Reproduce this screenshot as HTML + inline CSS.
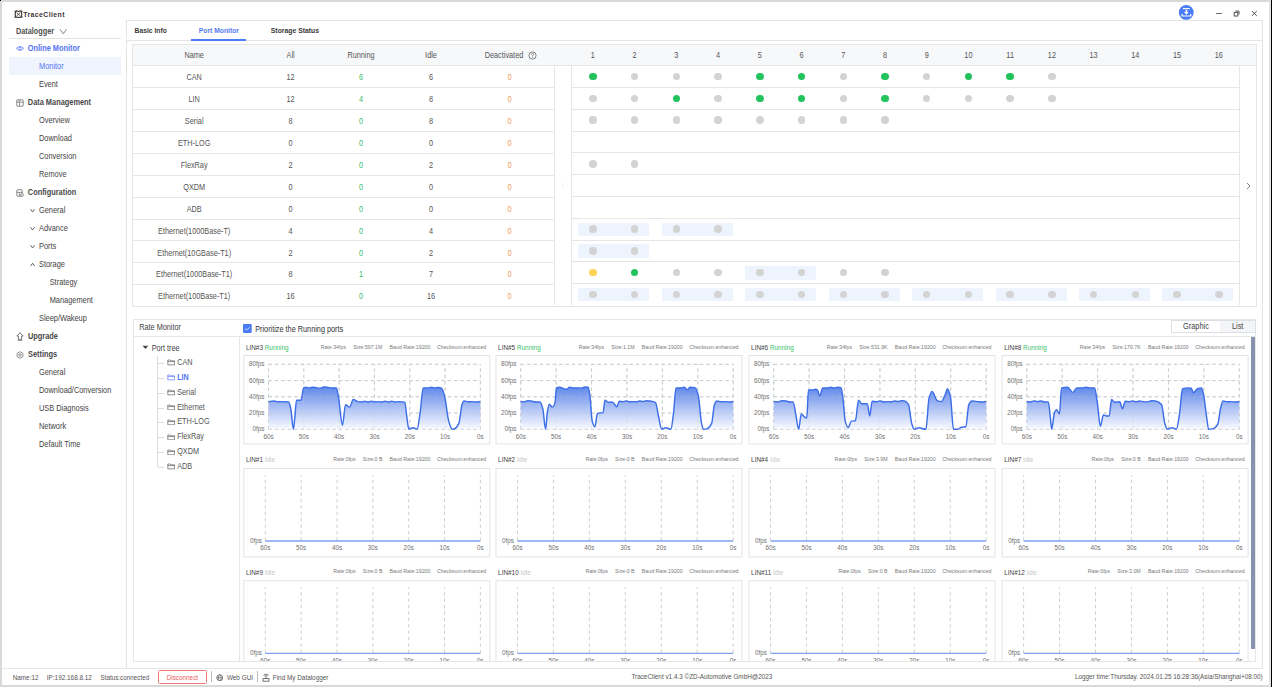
<!DOCTYPE html><html><head><meta charset="utf-8"><style>
*{margin:0;padding:0;box-sizing:border-box}
html,body{width:1272px;height:687px;overflow:hidden;background:#fff;font-family:"Liberation Sans", sans-serif;color:#333}
.ab{position:absolute}
.t{position:absolute;white-space:nowrap;line-height:1;transform:scaleY(1.14);transform-origin:50% 15%}
</style></head><body>

<div class="ab" style="left:0;top:0;width:1272px;height:2px;background:#d9d9d9"></div>
<div class="ab" style="left:0;top:0;width:2px;height:687px;background:#d9d9d9"></div>
<div class="ab" style="left:0;top:685px;width:1272px;height:2px;background:#d9d9d9"></div>
<div class="ab" style="left:1269px;top:0;width:2px;height:687px;background:#e2e2e2"></div>
<div class="ab" style="left:1271px;top:0;width:1px;height:687px;background:#000"></div>
<div class="ab" style="left:0;top:0;width:1px;height:1px;background:#000"></div>
<svg class="ab" style="left:13.5px;top:9.5px" width="9" height="8.5" viewBox="0 0 9 8.5">
<path d="M1.1 1.3 L2.7 0.9 L4.4 1.5 L6.3 0.9 L7.9 1.3 L7.4 2.9 L7.9 4.3 L7.4 5.8 L7.9 7.2 L6.3 7 L4.4 7.6 L2.6 7 L1.1 7.3 L1.6 5.7 L1 4.2 L1.6 2.7 Z" fill="none" stroke="#3b3434" stroke-width="1.1"/>
<path d="M2.6 2.5 L6.4 6 M6.4 2.5 L2.6 6" fill="none" stroke="#3b3434" stroke-width="0.8"/></svg>
<div class="t" style="left:23.3px;top:11.05px;font-size:6.9px;font-weight:bold;color:#3b3434;height:6.9px;line-height:6.9px;letter-spacing:0.4px">TraceClient</div>
<svg class="ab" style="left:1178px;top:4px" width="17" height="17" viewBox="0 0 17 17">
<circle cx="8.25" cy="8.4" r="7.4" fill="#4a7cf7"/>
<path d="M5 4.6 H11.7" stroke="#fff" stroke-width="1.2"/>
<path d="M7.6 5.9 H9.2 V7.9 H10.6 L8.4 10.8 L6.1 7.9 H7.6 Z" fill="#fff"/>
<path d="M4.1 9.9 V12 H12.7 V9.9" stroke="#fff" stroke-width="1.2" fill="none"/>
</svg>
<div class="ab" style="left:1215.6px;top:12.8px;width:6.4px;height:1px;background:#707070;"></div>
<svg class="ab" style="left:1233px;top:9.5px" width="7" height="7" viewBox="0 0 7 7">
<rect x="1.2" y="2.4" width="3.6" height="3.6" fill="none" stroke="#555" stroke-width="1"/>
<path d="M2.4 1.1 H6 V4.6" fill="none" stroke="#555" stroke-width="1"/></svg>
<svg class="ab" style="left:1251px;top:10px" width="7" height="7" viewBox="0 0 7 7">
<path d="M0.9 1 L5.8 5.9 M5.8 1 L0.9 5.9" stroke="#444" stroke-width="0.95"/></svg>
<div class="t" style="left:16px;top:27.05px;font-size:7.3px;font-weight:bold;color:#505050;height:7.3px;line-height:7.3px;">Datalogger</div>
<svg class="ab" style="left:59px;top:28px" width="9" height="7" viewBox="0 0 9 7">
<path d="M1 1.2 L4.3 5.8 L7.6 1.2" fill="none" stroke="#777" stroke-width="0.9"/></svg>
<div class="ab" style="left:9px;top:38px;width:112px;height:1px;background:#e3e3e3;"></div>
<div class="ab" style="left:9.2px;top:56.8px;width:111.5px;height:18.7px;background:#eff4ff;"></div>
<div class="t" style="left:27.8px;top:44.30px;font-size:7.4px;font-weight:bold;color:#5574f2;height:7.4px;line-height:7.4px;">Online Monitor</div>
<div class="t" style="left:39px;top:62.30px;font-size:7.4px;font-weight:normal;color:#5574f2;height:7.4px;line-height:7.4px;">Monitor</div>
<div class="t" style="left:39px;top:80.30px;font-size:7.4px;font-weight:normal;color:#444;height:7.4px;line-height:7.4px;">Event</div>
<div class="t" style="left:27.8px;top:98.30px;font-size:7.4px;font-weight:bold;color:#484848;height:7.4px;line-height:7.4px;">Data Management</div>
<div class="t" style="left:39px;top:116.30px;font-size:7.4px;font-weight:normal;color:#444;height:7.4px;line-height:7.4px;">Overview</div>
<div class="t" style="left:39px;top:134.30px;font-size:7.4px;font-weight:normal;color:#444;height:7.4px;line-height:7.4px;">Download</div>
<div class="t" style="left:39px;top:152.30px;font-size:7.4px;font-weight:normal;color:#444;height:7.4px;line-height:7.4px;">Conversion</div>
<div class="t" style="left:39px;top:170.30px;font-size:7.4px;font-weight:normal;color:#444;height:7.4px;line-height:7.4px;">Remove</div>
<div class="t" style="left:27.8px;top:188.30px;font-size:7.4px;font-weight:bold;color:#484848;height:7.4px;line-height:7.4px;">Configuration</div>
<div class="t" style="left:39px;top:206.30px;font-size:7.4px;font-weight:normal;color:#444;height:7.4px;line-height:7.4px;">General</div>
<div class="t" style="left:39px;top:224.30px;font-size:7.4px;font-weight:normal;color:#444;height:7.4px;line-height:7.4px;">Advance</div>
<div class="t" style="left:39px;top:242.30px;font-size:7.4px;font-weight:normal;color:#444;height:7.4px;line-height:7.4px;">Ports</div>
<div class="t" style="left:39px;top:260.30px;font-size:7.4px;font-weight:normal;color:#444;height:7.4px;line-height:7.4px;">Storage</div>
<div class="t" style="left:49.7px;top:278.30px;font-size:7.4px;font-weight:normal;color:#444;height:7.4px;line-height:7.4px;">Strategy</div>
<div class="t" style="left:49.7px;top:296.30px;font-size:7.4px;font-weight:normal;color:#444;height:7.4px;line-height:7.4px;">Management</div>
<div class="t" style="left:39px;top:314.30px;font-size:7.4px;font-weight:normal;color:#444;height:7.4px;line-height:7.4px;">Sleep/Wakeup</div>
<div class="t" style="left:28px;top:332.30px;font-size:7.4px;font-weight:bold;color:#484848;height:7.4px;line-height:7.4px;">Upgrade</div>
<div class="t" style="left:28px;top:350.30px;font-size:7.4px;font-weight:bold;color:#484848;height:7.4px;line-height:7.4px;">Settings</div>
<div class="t" style="left:39px;top:368.30px;font-size:7.4px;font-weight:normal;color:#444;height:7.4px;line-height:7.4px;">General</div>
<div class="t" style="left:39px;top:386.30px;font-size:7.4px;font-weight:normal;color:#444;height:7.4px;line-height:7.4px;">Download/Conversion</div>
<div class="t" style="left:39px;top:404.30px;font-size:7.4px;font-weight:normal;color:#444;height:7.4px;line-height:7.4px;">USB Diagnosis</div>
<div class="t" style="left:39px;top:422.30px;font-size:7.4px;font-weight:normal;color:#444;height:7.4px;line-height:7.4px;">Network</div>
<div class="t" style="left:39px;top:440.30px;font-size:7.4px;font-weight:normal;color:#444;height:7.4px;line-height:7.4px;">Default Time</div>
<svg class="ab" style="left:15.5px;top:45px" width="8" height="7" viewBox="0 0 8 7"><path d="M0.5 3.4 Q4 -0.4 7.5 3.4 Q4 7.2 0.5 3.4 Z" fill="none" stroke="#6f86f3" stroke-width="0.9"/><circle cx="4" cy="3.4" r="1.3" fill="none" stroke="#6f86f3" stroke-width="0.8"/></svg>
<svg class="ab" style="left:15.5px;top:98.5px" width="8" height="8" viewBox="0 0 8 8"><rect x="0.8" y="0.8" width="6.4" height="6.4" rx="0.6" fill="none" stroke="#7a7a7a" stroke-width="0.9"/><path d="M0.8 3.2 H7.2 M3.6 3.2 V7.2 M2 2 H4.5" fill="none" stroke="#7a7a7a" stroke-width="0.8"/></svg>
<svg class="ab" style="left:15.5px;top:188.5px" width="8" height="8" viewBox="0 0 8 8"><rect x="0.8" y="0.8" width="5.4" height="6.4" rx="0.6" fill="none" stroke="#7a7a7a" stroke-width="0.9"/><path d="M0.8 3.4 H6.2 M3.4 3.4 V7.2" fill="none" stroke="#7a7a7a" stroke-width="0.8"/><circle cx="6" cy="6" r="1.4" fill="#fff" stroke="#7a7a7a" stroke-width="0.8"/></svg>
<svg class="ab" style="left:15.5px;top:332px" width="8" height="9" viewBox="0 0 8 9"><path d="M4 0.8 L7.2 4 H5.6 V7.4 H2.4 V4 H0.8 Z" fill="none" stroke="#666" stroke-width="0.9"/><path d="M1.6 8.3 H6.4" stroke="#666" stroke-width="0.8"/></svg>
<svg class="ab" style="left:15.5px;top:350.5px" width="8" height="8" viewBox="0 0 8 8"><path d="M4 0.7 L6.9 2.3 V5.7 L4 7.3 L1.1 5.7 V2.3 Z" fill="none" stroke="#777" stroke-width="0.8"/><circle cx="4" cy="4" r="1.2" fill="none" stroke="#777" stroke-width="0.8"/></svg>
<svg class="ab" style="left:30.1px;top:207.6px" width="5.2" height="5.2" viewBox="0 0 5.2 5.2"><path d="M0.6 1.3 L2.6 3.9 L4.6 1.3" fill="none" stroke="#505050" stroke-width="0.95"/></svg>
<svg class="ab" style="left:30.1px;top:225.6px" width="5.2" height="5.2" viewBox="0 0 5.2 5.2"><path d="M0.6 1.3 L2.6 3.9 L4.6 1.3" fill="none" stroke="#505050" stroke-width="0.95"/></svg>
<svg class="ab" style="left:30.1px;top:243.6px" width="5.2" height="5.2" viewBox="0 0 5.2 5.2"><path d="M0.6 1.3 L2.6 3.9 L4.6 1.3" fill="none" stroke="#505050" stroke-width="0.95"/></svg>
<svg class="ab" style="left:30.1px;top:261.6px" width="5.2" height="5.2" viewBox="0 0 5.2 5.2"><path d="M0.6 3.9 L2.6 1.3 L4.6 3.9" fill="none" stroke="#505050" stroke-width="0.95"/></svg>
<div class="ab" style="left:126px;top:20px;width:1137px;height:649px;border:1px solid #e4e4e4"></div>
<div class="ab" style="left:2px;top:668px;width:1261px;height:1px;background:#e6e6e6;"></div>
<div class="t" style="left:134.6px;top:27.23px;font-size:6.75px;font-weight:bold;color:#3a3a3a;height:6.75px;line-height:6.75px;">Basic Info</div>
<div class="t" style="left:198.8px;top:27.23px;font-size:6.75px;font-weight:bold;color:#5577f0;height:6.75px;line-height:6.75px;">Port Monitor</div>
<div class="t" style="left:270.8px;top:27.18px;font-size:6.85px;font-weight:bold;color:#3a3a3a;height:6.85px;line-height:6.85px;">Storage Status</div>
<div class="ab" style="left:127px;top:40px;width:1135px;height:1px;background:#e4e4e4;"></div>
<div class="ab" style="left:190.7px;top:39.2px;width:55.3px;height:1.8px;background:#4b7bf5;"></div>
<div class="ab" style="left:132px;top:44px;width:1125px;height:263px;border:1px solid #e6e6e6"></div>
<div class="ab" style="left:133px;top:45px;width:1123px;height:21px;background:#f7f8fa;"></div>
<div class="ab" style="left:133px;top:65.1px;width:1123px;height:1px;background:#e6e6e6;"></div>
<div class="ab" style="left:553.5px;top:66px;width:1px;height:238.5px;background:#e6e6e6;"></div>
<div class="ab" style="left:571.2px;top:66px;width:1px;height:238.5px;background:#e6e6e6;"></div>
<div class="ab" style="left:1238.8px;top:66px;width:1px;height:238.5px;background:#e6e6e6;"></div>
<div class="ab" style="left:133px;top:87.28px;width:420.5px;height:1px;background:#e6e6e6;"></div>
<div class="ab" style="left:572.2px;top:87.17px;width:666.5999999999999px;height:1px;background:#e6e6e6;"></div>
<div class="ab" style="left:133px;top:109.16px;width:420.5px;height:1px;background:#e6e6e6;"></div>
<div class="ab" style="left:572.2px;top:108.94px;width:666.5999999999999px;height:1px;background:#e6e6e6;"></div>
<div class="ab" style="left:133px;top:131.04px;width:420.5px;height:1px;background:#e6e6e6;"></div>
<div class="ab" style="left:572.2px;top:130.71px;width:666.5999999999999px;height:1px;background:#e6e6e6;"></div>
<div class="ab" style="left:133px;top:152.92px;width:420.5px;height:1px;background:#e6e6e6;"></div>
<div class="ab" style="left:572.2px;top:152.48px;width:666.5999999999999px;height:1px;background:#e6e6e6;"></div>
<div class="ab" style="left:133px;top:174.8px;width:420.5px;height:1px;background:#e6e6e6;"></div>
<div class="ab" style="left:572.2px;top:174.25px;width:666.5999999999999px;height:1px;background:#e6e6e6;"></div>
<div class="ab" style="left:133px;top:196.68px;width:420.5px;height:1px;background:#e6e6e6;"></div>
<div class="ab" style="left:572.2px;top:196.02px;width:666.5999999999999px;height:1px;background:#e6e6e6;"></div>
<div class="ab" style="left:133px;top:218.56px;width:420.5px;height:1px;background:#e6e6e6;"></div>
<div class="ab" style="left:572.2px;top:217.79px;width:666.5999999999999px;height:1px;background:#e6e6e6;"></div>
<div class="ab" style="left:133px;top:240.44px;width:420.5px;height:1px;background:#e6e6e6;"></div>
<div class="ab" style="left:572.2px;top:239.56px;width:666.5999999999999px;height:1px;background:#e6e6e6;"></div>
<div class="ab" style="left:133px;top:262.32px;width:420.5px;height:1px;background:#e6e6e6;"></div>
<div class="ab" style="left:572.2px;top:261.33px;width:666.5999999999999px;height:1px;background:#e6e6e6;"></div>
<div class="ab" style="left:133px;top:284.2px;width:420.5px;height:1px;background:#e6e6e6;"></div>
<div class="ab" style="left:572.2px;top:283.1px;width:666.5999999999999px;height:1px;background:#e6e6e6;"></div>
<div class="t" style="left:94.19999999999999px;width:200px;text-align:center;top:51.25px;font-size:7.3px;font-weight:normal;color:#555;height:7.3px;line-height:7.3px;">Name</div>
<div class="t" style="left:190.60000000000002px;width:200px;text-align:center;top:51.25px;font-size:7.3px;font-weight:normal;color:#555;height:7.3px;line-height:7.3px;">All</div>
<div class="t" style="left:261px;width:200px;text-align:center;top:51.25px;font-size:7.3px;font-weight:normal;color:#555;height:7.3px;line-height:7.3px;">Running</div>
<div class="t" style="left:331px;width:200px;text-align:center;top:51.25px;font-size:7.3px;font-weight:normal;color:#555;height:7.3px;line-height:7.3px;">Idle</div>
<div class="t" style="left:404.0px;width:200px;text-align:center;top:51.25px;font-size:7.3px;font-weight:normal;color:#555;height:7.3px;line-height:7.3px;">Deactivated</div>
<svg class="ab" style="left:528px;top:51px" width="9" height="9" viewBox="0 0 9 9"><circle cx="4.5" cy="4.5" r="3.6" fill="none" stroke="#666" stroke-width="0.8"/><path d="M3.3 3.6 Q3.4 2.5 4.5 2.5 Q5.7 2.6 5.6 3.6 Q5.5 4.3 4.5 4.7 V5.4" fill="none" stroke="#666" stroke-width="0.75"/><circle cx="4.5" cy="6.5" r="0.45" fill="#666"/></svg>
<div class="t" style="left:492.865px;width:200px;text-align:center;top:51.25px;font-size:7.3px;font-weight:normal;color:#555;height:7.3px;line-height:7.3px;">1</div>
<div class="t" style="left:534.595px;width:200px;text-align:center;top:51.25px;font-size:7.3px;font-weight:normal;color:#555;height:7.3px;line-height:7.3px;">2</div>
<div class="t" style="left:576.325px;width:200px;text-align:center;top:51.25px;font-size:7.3px;font-weight:normal;color:#555;height:7.3px;line-height:7.3px;">3</div>
<div class="t" style="left:618.055px;width:200px;text-align:center;top:51.25px;font-size:7.3px;font-weight:normal;color:#555;height:7.3px;line-height:7.3px;">4</div>
<div class="t" style="left:659.785px;width:200px;text-align:center;top:51.25px;font-size:7.3px;font-weight:normal;color:#555;height:7.3px;line-height:7.3px;">5</div>
<div class="t" style="left:701.515px;width:200px;text-align:center;top:51.25px;font-size:7.3px;font-weight:normal;color:#555;height:7.3px;line-height:7.3px;">6</div>
<div class="t" style="left:743.245px;width:200px;text-align:center;top:51.25px;font-size:7.3px;font-weight:normal;color:#555;height:7.3px;line-height:7.3px;">7</div>
<div class="t" style="left:784.9749999999999px;width:200px;text-align:center;top:51.25px;font-size:7.3px;font-weight:normal;color:#555;height:7.3px;line-height:7.3px;">8</div>
<div class="t" style="left:826.7049999999999px;width:200px;text-align:center;top:51.25px;font-size:7.3px;font-weight:normal;color:#555;height:7.3px;line-height:7.3px;">9</div>
<div class="t" style="left:868.435px;width:200px;text-align:center;top:51.25px;font-size:7.3px;font-weight:normal;color:#555;height:7.3px;line-height:7.3px;">10</div>
<div class="t" style="left:910.165px;width:200px;text-align:center;top:51.25px;font-size:7.3px;font-weight:normal;color:#555;height:7.3px;line-height:7.3px;">11</div>
<div class="t" style="left:951.895px;width:200px;text-align:center;top:51.25px;font-size:7.3px;font-weight:normal;color:#555;height:7.3px;line-height:7.3px;">12</div>
<div class="t" style="left:993.625px;width:200px;text-align:center;top:51.25px;font-size:7.3px;font-weight:normal;color:#555;height:7.3px;line-height:7.3px;">13</div>
<div class="t" style="left:1035.355px;width:200px;text-align:center;top:51.25px;font-size:7.3px;font-weight:normal;color:#555;height:7.3px;line-height:7.3px;">14</div>
<div class="t" style="left:1077.085px;width:200px;text-align:center;top:51.25px;font-size:7.3px;font-weight:normal;color:#555;height:7.3px;line-height:7.3px;">15</div>
<div class="t" style="left:1118.815px;width:200px;text-align:center;top:51.25px;font-size:7.3px;font-weight:normal;color:#555;height:7.3px;line-height:7.3px;">16</div>
<div class="t" style="left:94.19999999999999px;width:200px;text-align:center;top:73.49px;font-size:7.3px;font-weight:normal;color:#555;height:7.3px;line-height:7.3px;">CAN</div>
<div class="t" style="left:190.60000000000002px;width:200px;text-align:center;top:73.49px;font-size:7.3px;font-weight:normal;color:#555;height:7.3px;line-height:7.3px;">12</div>
<div class="t" style="left:261px;width:200px;text-align:center;top:73.49px;font-size:7.3px;font-weight:normal;color:#36c06a;height:7.3px;line-height:7.3px;">6</div>
<div class="t" style="left:331px;width:200px;text-align:center;top:73.49px;font-size:7.3px;font-weight:normal;color:#555;height:7.3px;line-height:7.3px;">6</div>
<div class="t" style="left:409.5px;width:200px;text-align:center;top:73.49px;font-size:7.3px;font-weight:normal;color:#f39a5c;height:7.3px;line-height:7.3px;">0</div>
<div class="t" style="left:94.19999999999999px;width:200px;text-align:center;top:95.37px;font-size:7.3px;font-weight:normal;color:#555;height:7.3px;line-height:7.3px;">LIN</div>
<div class="t" style="left:190.60000000000002px;width:200px;text-align:center;top:95.37px;font-size:7.3px;font-weight:normal;color:#555;height:7.3px;line-height:7.3px;">12</div>
<div class="t" style="left:261px;width:200px;text-align:center;top:95.37px;font-size:7.3px;font-weight:normal;color:#36c06a;height:7.3px;line-height:7.3px;">4</div>
<div class="t" style="left:331px;width:200px;text-align:center;top:95.37px;font-size:7.3px;font-weight:normal;color:#555;height:7.3px;line-height:7.3px;">8</div>
<div class="t" style="left:409.5px;width:200px;text-align:center;top:95.37px;font-size:7.3px;font-weight:normal;color:#f39a5c;height:7.3px;line-height:7.3px;">0</div>
<div class="t" style="left:94.19999999999999px;width:200px;text-align:center;top:117.25px;font-size:7.3px;font-weight:normal;color:#555;height:7.3px;line-height:7.3px;">Serial</div>
<div class="t" style="left:190.60000000000002px;width:200px;text-align:center;top:117.25px;font-size:7.3px;font-weight:normal;color:#555;height:7.3px;line-height:7.3px;">8</div>
<div class="t" style="left:261px;width:200px;text-align:center;top:117.25px;font-size:7.3px;font-weight:normal;color:#36c06a;height:7.3px;line-height:7.3px;">0</div>
<div class="t" style="left:331px;width:200px;text-align:center;top:117.25px;font-size:7.3px;font-weight:normal;color:#555;height:7.3px;line-height:7.3px;">8</div>
<div class="t" style="left:409.5px;width:200px;text-align:center;top:117.25px;font-size:7.3px;font-weight:normal;color:#f39a5c;height:7.3px;line-height:7.3px;">0</div>
<div class="t" style="left:94.19999999999999px;width:200px;text-align:center;top:139.13px;font-size:7.3px;font-weight:normal;color:#555;height:7.3px;line-height:7.3px;">ETH-LOG</div>
<div class="t" style="left:190.60000000000002px;width:200px;text-align:center;top:139.13px;font-size:7.3px;font-weight:normal;color:#555;height:7.3px;line-height:7.3px;">0</div>
<div class="t" style="left:261px;width:200px;text-align:center;top:139.13px;font-size:7.3px;font-weight:normal;color:#36c06a;height:7.3px;line-height:7.3px;">0</div>
<div class="t" style="left:331px;width:200px;text-align:center;top:139.13px;font-size:7.3px;font-weight:normal;color:#555;height:7.3px;line-height:7.3px;">0</div>
<div class="t" style="left:409.5px;width:200px;text-align:center;top:139.13px;font-size:7.3px;font-weight:normal;color:#f39a5c;height:7.3px;line-height:7.3px;">0</div>
<div class="t" style="left:94.19999999999999px;width:200px;text-align:center;top:161.01px;font-size:7.3px;font-weight:normal;color:#555;height:7.3px;line-height:7.3px;">FlexRay</div>
<div class="t" style="left:190.60000000000002px;width:200px;text-align:center;top:161.01px;font-size:7.3px;font-weight:normal;color:#555;height:7.3px;line-height:7.3px;">2</div>
<div class="t" style="left:261px;width:200px;text-align:center;top:161.01px;font-size:7.3px;font-weight:normal;color:#36c06a;height:7.3px;line-height:7.3px;">0</div>
<div class="t" style="left:331px;width:200px;text-align:center;top:161.01px;font-size:7.3px;font-weight:normal;color:#555;height:7.3px;line-height:7.3px;">2</div>
<div class="t" style="left:409.5px;width:200px;text-align:center;top:161.01px;font-size:7.3px;font-weight:normal;color:#f39a5c;height:7.3px;line-height:7.3px;">0</div>
<div class="t" style="left:94.19999999999999px;width:200px;text-align:center;top:182.89px;font-size:7.3px;font-weight:normal;color:#555;height:7.3px;line-height:7.3px;">QXDM</div>
<div class="t" style="left:190.60000000000002px;width:200px;text-align:center;top:182.89px;font-size:7.3px;font-weight:normal;color:#555;height:7.3px;line-height:7.3px;">0</div>
<div class="t" style="left:261px;width:200px;text-align:center;top:182.89px;font-size:7.3px;font-weight:normal;color:#36c06a;height:7.3px;line-height:7.3px;">0</div>
<div class="t" style="left:331px;width:200px;text-align:center;top:182.89px;font-size:7.3px;font-weight:normal;color:#555;height:7.3px;line-height:7.3px;">0</div>
<div class="t" style="left:409.5px;width:200px;text-align:center;top:182.89px;font-size:7.3px;font-weight:normal;color:#f39a5c;height:7.3px;line-height:7.3px;">0</div>
<div class="t" style="left:94.19999999999999px;width:200px;text-align:center;top:204.77px;font-size:7.3px;font-weight:normal;color:#555;height:7.3px;line-height:7.3px;">ADB</div>
<div class="t" style="left:190.60000000000002px;width:200px;text-align:center;top:204.77px;font-size:7.3px;font-weight:normal;color:#555;height:7.3px;line-height:7.3px;">0</div>
<div class="t" style="left:261px;width:200px;text-align:center;top:204.77px;font-size:7.3px;font-weight:normal;color:#36c06a;height:7.3px;line-height:7.3px;">0</div>
<div class="t" style="left:331px;width:200px;text-align:center;top:204.77px;font-size:7.3px;font-weight:normal;color:#555;height:7.3px;line-height:7.3px;">0</div>
<div class="t" style="left:409.5px;width:200px;text-align:center;top:204.77px;font-size:7.3px;font-weight:normal;color:#f39a5c;height:7.3px;line-height:7.3px;">0</div>
<div class="t" style="left:94.19999999999999px;width:200px;text-align:center;top:226.65px;font-size:7.3px;font-weight:normal;color:#555;height:7.3px;line-height:7.3px;">Ethernet(1000Base-T)</div>
<div class="t" style="left:190.60000000000002px;width:200px;text-align:center;top:226.65px;font-size:7.3px;font-weight:normal;color:#555;height:7.3px;line-height:7.3px;">4</div>
<div class="t" style="left:261px;width:200px;text-align:center;top:226.65px;font-size:7.3px;font-weight:normal;color:#36c06a;height:7.3px;line-height:7.3px;">0</div>
<div class="t" style="left:331px;width:200px;text-align:center;top:226.65px;font-size:7.3px;font-weight:normal;color:#555;height:7.3px;line-height:7.3px;">4</div>
<div class="t" style="left:409.5px;width:200px;text-align:center;top:226.65px;font-size:7.3px;font-weight:normal;color:#f39a5c;height:7.3px;line-height:7.3px;">0</div>
<div class="t" style="left:94.19999999999999px;width:200px;text-align:center;top:248.53px;font-size:7.3px;font-weight:normal;color:#555;height:7.3px;line-height:7.3px;">Ethernet(10GBase-T1)</div>
<div class="t" style="left:190.60000000000002px;width:200px;text-align:center;top:248.53px;font-size:7.3px;font-weight:normal;color:#555;height:7.3px;line-height:7.3px;">2</div>
<div class="t" style="left:261px;width:200px;text-align:center;top:248.53px;font-size:7.3px;font-weight:normal;color:#36c06a;height:7.3px;line-height:7.3px;">0</div>
<div class="t" style="left:331px;width:200px;text-align:center;top:248.53px;font-size:7.3px;font-weight:normal;color:#555;height:7.3px;line-height:7.3px;">2</div>
<div class="t" style="left:409.5px;width:200px;text-align:center;top:248.53px;font-size:7.3px;font-weight:normal;color:#f39a5c;height:7.3px;line-height:7.3px;">0</div>
<div class="t" style="left:94.19999999999999px;width:200px;text-align:center;top:270.41px;font-size:7.3px;font-weight:normal;color:#555;height:7.3px;line-height:7.3px;">Ethernet(1000Base-T1)</div>
<div class="t" style="left:190.60000000000002px;width:200px;text-align:center;top:270.41px;font-size:7.3px;font-weight:normal;color:#555;height:7.3px;line-height:7.3px;">8</div>
<div class="t" style="left:261px;width:200px;text-align:center;top:270.41px;font-size:7.3px;font-weight:normal;color:#36c06a;height:7.3px;line-height:7.3px;">1</div>
<div class="t" style="left:331px;width:200px;text-align:center;top:270.41px;font-size:7.3px;font-weight:normal;color:#555;height:7.3px;line-height:7.3px;">7</div>
<div class="t" style="left:409.5px;width:200px;text-align:center;top:270.41px;font-size:7.3px;font-weight:normal;color:#f39a5c;height:7.3px;line-height:7.3px;">0</div>
<div class="t" style="left:94.19999999999999px;width:200px;text-align:center;top:292.29px;font-size:7.3px;font-weight:normal;color:#555;height:7.3px;line-height:7.3px;">Ethernet(100Base-T1)</div>
<div class="t" style="left:190.60000000000002px;width:200px;text-align:center;top:292.29px;font-size:7.3px;font-weight:normal;color:#555;height:7.3px;line-height:7.3px;">16</div>
<div class="t" style="left:261px;width:200px;text-align:center;top:292.29px;font-size:7.3px;font-weight:normal;color:#36c06a;height:7.3px;line-height:7.3px;">0</div>
<div class="t" style="left:331px;width:200px;text-align:center;top:292.29px;font-size:7.3px;font-weight:normal;color:#555;height:7.3px;line-height:7.3px;">16</div>
<div class="t" style="left:409.5px;width:200px;text-align:center;top:292.29px;font-size:7.3px;font-weight:normal;color:#f39a5c;height:7.3px;line-height:7.3px;">0</div>
<svg class="ab" style="left:1245px;top:182px" width="7" height="8" viewBox="0 0 7 8"><path d="M2 1 L5 4 L2 7" fill="none" stroke="#777" stroke-width="0.9"/></svg>
<svg class="ab" style="left:560px;top:182px" width="7" height="8" viewBox="0 0 7 8"><path d="M5 1 L2 4 L5 7" fill="none" stroke="#eee" stroke-width="0.9"/></svg>
<div class="ab" style="left:578.2px;top:222.7px;width:71px;height:13.4px;background:#eef4fd;"></div>
<div class="ab" style="left:661.7px;top:222.7px;width:71px;height:13.4px;background:#eef4fd;"></div>
<div class="ab" style="left:578.2px;top:244.4px;width:71px;height:13.4px;background:#eef4fd;"></div>
<div class="ab" style="left:745.1px;top:266.2px;width:71px;height:13.4px;background:#eef4fd;"></div>
<div class="ab" style="left:578.2px;top:288.0px;width:71px;height:13.4px;background:#eef4fd;"></div>
<div class="ab" style="left:661.7px;top:288.0px;width:71px;height:13.4px;background:#eef4fd;"></div>
<div class="ab" style="left:745.1px;top:288.0px;width:71px;height:13.4px;background:#eef4fd;"></div>
<div class="ab" style="left:828.6px;top:288.0px;width:71px;height:13.4px;background:#eef4fd;"></div>
<div class="ab" style="left:912.0px;top:288.0px;width:71px;height:13.4px;background:#eef4fd;"></div>
<div class="ab" style="left:995.5px;top:288.0px;width:71px;height:13.4px;background:#eef4fd;"></div>
<div class="ab" style="left:1079.0px;top:288.0px;width:71px;height:13.4px;background:#eef4fd;"></div>
<div class="ab" style="left:1162.4px;top:288.0px;width:71px;height:13.4px;background:#eef4fd;"></div>
<div class="ab" style="left:589.12px;top:72.94px;width:7.5px;height:7.5px;border-radius:50%;background:#22c35d"></div>
<div class="ab" style="left:630.85px;top:72.94px;width:7.5px;height:7.5px;border-radius:50%;background:#d3d3d3"></div>
<div class="ab" style="left:672.58px;top:72.94px;width:7.5px;height:7.5px;border-radius:50%;background:#d3d3d3"></div>
<div class="ab" style="left:714.30px;top:72.94px;width:7.5px;height:7.5px;border-radius:50%;background:#d3d3d3"></div>
<div class="ab" style="left:756.03px;top:72.94px;width:7.5px;height:7.5px;border-radius:50%;background:#22c35d"></div>
<div class="ab" style="left:797.76px;top:72.94px;width:7.5px;height:7.5px;border-radius:50%;background:#22c35d"></div>
<div class="ab" style="left:839.50px;top:72.94px;width:7.5px;height:7.5px;border-radius:50%;background:#d3d3d3"></div>
<div class="ab" style="left:881.22px;top:72.94px;width:7.5px;height:7.5px;border-radius:50%;background:#22c35d"></div>
<div class="ab" style="left:922.95px;top:72.94px;width:7.5px;height:7.5px;border-radius:50%;background:#d3d3d3"></div>
<div class="ab" style="left:964.68px;top:72.94px;width:7.5px;height:7.5px;border-radius:50%;background:#22c35d"></div>
<div class="ab" style="left:1006.41px;top:72.94px;width:7.5px;height:7.5px;border-radius:50%;background:#22c35d"></div>
<div class="ab" style="left:1048.14px;top:72.94px;width:7.5px;height:7.5px;border-radius:50%;background:#d3d3d3"></div>
<div class="ab" style="left:589.12px;top:94.70px;width:7.5px;height:7.5px;border-radius:50%;background:#d3d3d3"></div>
<div class="ab" style="left:630.85px;top:94.70px;width:7.5px;height:7.5px;border-radius:50%;background:#d3d3d3"></div>
<div class="ab" style="left:672.58px;top:94.70px;width:7.5px;height:7.5px;border-radius:50%;background:#22c35d"></div>
<div class="ab" style="left:714.30px;top:94.70px;width:7.5px;height:7.5px;border-radius:50%;background:#d3d3d3"></div>
<div class="ab" style="left:756.03px;top:94.70px;width:7.5px;height:7.5px;border-radius:50%;background:#22c35d"></div>
<div class="ab" style="left:797.76px;top:94.70px;width:7.5px;height:7.5px;border-radius:50%;background:#22c35d"></div>
<div class="ab" style="left:839.50px;top:94.70px;width:7.5px;height:7.5px;border-radius:50%;background:#d3d3d3"></div>
<div class="ab" style="left:881.22px;top:94.70px;width:7.5px;height:7.5px;border-radius:50%;background:#22c35d"></div>
<div class="ab" style="left:922.95px;top:94.70px;width:7.5px;height:7.5px;border-radius:50%;background:#d3d3d3"></div>
<div class="ab" style="left:964.68px;top:94.70px;width:7.5px;height:7.5px;border-radius:50%;background:#d3d3d3"></div>
<div class="ab" style="left:1006.41px;top:94.70px;width:7.5px;height:7.5px;border-radius:50%;background:#d3d3d3"></div>
<div class="ab" style="left:1048.14px;top:94.70px;width:7.5px;height:7.5px;border-radius:50%;background:#d3d3d3"></div>
<div class="ab" style="left:589.12px;top:116.47px;width:7.5px;height:7.5px;border-radius:50%;background:#d3d3d3"></div>
<div class="ab" style="left:630.85px;top:116.47px;width:7.5px;height:7.5px;border-radius:50%;background:#d3d3d3"></div>
<div class="ab" style="left:672.58px;top:116.47px;width:7.5px;height:7.5px;border-radius:50%;background:#d3d3d3"></div>
<div class="ab" style="left:714.30px;top:116.47px;width:7.5px;height:7.5px;border-radius:50%;background:#d3d3d3"></div>
<div class="ab" style="left:756.03px;top:116.47px;width:7.5px;height:7.5px;border-radius:50%;background:#d3d3d3"></div>
<div class="ab" style="left:797.76px;top:116.47px;width:7.5px;height:7.5px;border-radius:50%;background:#d3d3d3"></div>
<div class="ab" style="left:839.50px;top:116.47px;width:7.5px;height:7.5px;border-radius:50%;background:#d3d3d3"></div>
<div class="ab" style="left:881.22px;top:116.47px;width:7.5px;height:7.5px;border-radius:50%;background:#d3d3d3"></div>
<div class="ab" style="left:589.12px;top:160.01px;width:7.5px;height:7.5px;border-radius:50%;background:#d3d3d3"></div>
<div class="ab" style="left:630.85px;top:160.01px;width:7.5px;height:7.5px;border-radius:50%;background:#d3d3d3"></div>
<div class="ab" style="left:589.12px;top:225.32px;width:7.5px;height:7.5px;border-radius:50%;background:#d3d3d3"></div>
<div class="ab" style="left:630.85px;top:225.32px;width:7.5px;height:7.5px;border-radius:50%;background:#d3d3d3"></div>
<div class="ab" style="left:672.58px;top:225.32px;width:7.5px;height:7.5px;border-radius:50%;background:#d3d3d3"></div>
<div class="ab" style="left:714.30px;top:225.32px;width:7.5px;height:7.5px;border-radius:50%;background:#d3d3d3"></div>
<div class="ab" style="left:589.12px;top:247.09px;width:7.5px;height:7.5px;border-radius:50%;background:#d3d3d3"></div>
<div class="ab" style="left:630.85px;top:247.09px;width:7.5px;height:7.5px;border-radius:50%;background:#d3d3d3"></div>
<div class="ab" style="left:589.12px;top:268.86px;width:7.5px;height:7.5px;border-radius:50%;background:#fcd457"></div>
<div class="ab" style="left:630.85px;top:268.86px;width:7.5px;height:7.5px;border-radius:50%;background:#22c35d"></div>
<div class="ab" style="left:672.58px;top:268.86px;width:7.5px;height:7.5px;border-radius:50%;background:#d3d3d3"></div>
<div class="ab" style="left:714.30px;top:268.86px;width:7.5px;height:7.5px;border-radius:50%;background:#d3d3d3"></div>
<div class="ab" style="left:756.03px;top:268.86px;width:7.5px;height:7.5px;border-radius:50%;background:#d3d3d3"></div>
<div class="ab" style="left:797.76px;top:268.86px;width:7.5px;height:7.5px;border-radius:50%;background:#d3d3d3"></div>
<div class="ab" style="left:839.50px;top:268.86px;width:7.5px;height:7.5px;border-radius:50%;background:#d3d3d3"></div>
<div class="ab" style="left:881.22px;top:268.86px;width:7.5px;height:7.5px;border-radius:50%;background:#d3d3d3"></div>
<div class="ab" style="left:589.12px;top:290.63px;width:7.5px;height:7.5px;border-radius:50%;background:#d3d3d3"></div>
<div class="ab" style="left:630.85px;top:290.63px;width:7.5px;height:7.5px;border-radius:50%;background:#d3d3d3"></div>
<div class="ab" style="left:672.58px;top:290.63px;width:7.5px;height:7.5px;border-radius:50%;background:#d3d3d3"></div>
<div class="ab" style="left:714.30px;top:290.63px;width:7.5px;height:7.5px;border-radius:50%;background:#d3d3d3"></div>
<div class="ab" style="left:756.03px;top:290.63px;width:7.5px;height:7.5px;border-radius:50%;background:#d3d3d3"></div>
<div class="ab" style="left:797.76px;top:290.63px;width:7.5px;height:7.5px;border-radius:50%;background:#d3d3d3"></div>
<div class="ab" style="left:839.50px;top:290.63px;width:7.5px;height:7.5px;border-radius:50%;background:#d3d3d3"></div>
<div class="ab" style="left:881.22px;top:290.63px;width:7.5px;height:7.5px;border-radius:50%;background:#d3d3d3"></div>
<div class="ab" style="left:922.95px;top:290.63px;width:7.5px;height:7.5px;border-radius:50%;background:#d3d3d3"></div>
<div class="ab" style="left:964.68px;top:290.63px;width:7.5px;height:7.5px;border-radius:50%;background:#d3d3d3"></div>
<div class="ab" style="left:1006.41px;top:290.63px;width:7.5px;height:7.5px;border-radius:50%;background:#d3d3d3"></div>
<div class="ab" style="left:1048.14px;top:290.63px;width:7.5px;height:7.5px;border-radius:50%;background:#d3d3d3"></div>
<div class="ab" style="left:1089.88px;top:290.63px;width:7.5px;height:7.5px;border-radius:50%;background:#d3d3d3"></div>
<div class="ab" style="left:1131.61px;top:290.63px;width:7.5px;height:7.5px;border-radius:50%;background:#d3d3d3"></div>
<div class="ab" style="left:1173.34px;top:290.63px;width:7.5px;height:7.5px;border-radius:50%;background:#d3d3d3"></div>
<div class="ab" style="left:1215.07px;top:290.63px;width:7.5px;height:7.5px;border-radius:50%;background:#d3d3d3"></div>
<div class="ab" style="left:133px;top:318.5px;width:1123px;height:343.0px;border:1px solid #e6e6e6"></div>
<div class="ab" style="left:134px;top:335.5px;width:1121px;height:1px;background:#e6e6e6;"></div>
<div class="ab" style="left:239px;top:336px;width:1px;height:325.5px;background:#e6e6e6;"></div>
<div class="t" style="left:139.2px;top:323.05px;font-size:7.3px;font-weight:normal;color:#444;height:7.3px;line-height:7.3px;">Rate Monitor</div>
<svg class="ab" style="left:243px;top:323.8px" width="9" height="9" viewBox="0 0 9 9"><rect x="0" y="0" width="8.7" height="8.9" rx="0.8" fill="#4a7cf5"/><path d="M2.1 4.6 L3.8 5.9 L6.6 3.4" fill="none" stroke="#fff" stroke-width="0.8" opacity="0.9"/></svg>
<div class="t" style="left:255.2px;top:324.85px;font-size:7.3px;font-weight:normal;color:#333;height:7.3px;line-height:7.3px;">Prioritize the Running ports</div>
<div class="ab" style="left:1171px;top:319.5px;width:50px;height:13.5px;border:1px solid #dcdfe6;background:#fff"></div>
<div class="ab" style="left:1220px;top:319.5px;width:35.5px;height:13.5px;border:1px solid #dcdfe6;border-left:none;background:#f4f5f7"></div>
<div class="t" style="left:1096px;width:200px;text-align:center;top:321.70px;font-size:7.4px;font-weight:normal;color:#444;height:7.4px;line-height:7.4px;">Graphic</div>
<div class="t" style="left:1137.7px;width:200px;text-align:center;top:321.70px;font-size:7.4px;font-weight:normal;color:#444;height:7.4px;line-height:7.4px;">List</div>
<svg class="ab" style="left:142px;top:345px" width="7" height="5" viewBox="0 0 7 5"><path d="M0.5 0.7 H6.3 L3.4 4.1 Z" fill="#484848"/></svg>
<div class="t" style="left:151.7px;top:344.15px;font-size:7.3px;font-weight:normal;color:#444;height:7.3px;line-height:7.3px;">Port tree</div>
<div class="ab" style="left:157.3px;top:356.3px;width:0.9px;height:110.5px;background:#dcdcdc;"></div>
<div class="ab" style="left:157.8px;top:363.0px;width:5.8px;height:0.9px;background:#dcdcdc;"></div>
<svg class="ab" style="left:166.5px;top:359.4px" width="8.5" height="6.5" viewBox="0 0 8.5 6.5"><path d="M0.8 1 H3.2 L3.8 1.8 H7.6 V5.8 H0.8 Z M0.8 2.6 H7.6" fill="none" stroke="#555" stroke-width="0.65"/></svg>
<div class="t" style="left:177.2px;top:358.05px;font-size:7.3px;font-weight:normal;color:#555;height:7.3px;line-height:7.3px;">CAN</div>
<div class="ab" style="left:157.8px;top:377.9px;width:5.8px;height:0.9px;background:#dcdcdc;"></div>
<svg class="ab" style="left:166.5px;top:374.2px" width="8.5" height="6.5" viewBox="0 0 8.5 6.5"><path d="M0.8 1 H3.2 L3.8 1.8 H7.6 V5.8 H0.8 Z M0.8 2.6 H7.6" fill="none" stroke="#5574f2" stroke-width="0.65"/></svg>
<div class="t" style="left:177.2px;top:372.95px;font-size:7.2px;font-weight:bold;color:#5574f2;height:7.2px;line-height:7.2px;">LIN</div>
<div class="ab" style="left:157.8px;top:392.7px;width:5.8px;height:0.9px;background:#dcdcdc;"></div>
<svg class="ab" style="left:166.5px;top:389.1px" width="8.5" height="6.5" viewBox="0 0 8.5 6.5"><path d="M0.8 1 H3.2 L3.8 1.8 H7.6 V5.8 H0.8 Z M0.8 2.6 H7.6" fill="none" stroke="#555" stroke-width="0.65"/></svg>
<div class="t" style="left:177.2px;top:387.75px;font-size:7.3px;font-weight:normal;color:#555;height:7.3px;line-height:7.3px;">Serial</div>
<div class="ab" style="left:157.8px;top:407.6px;width:5.8px;height:0.9px;background:#dcdcdc;"></div>
<svg class="ab" style="left:166.5px;top:403.9px" width="8.5" height="6.5" viewBox="0 0 8.5 6.5"><path d="M0.8 1 H3.2 L3.8 1.8 H7.6 V5.8 H0.8 Z M0.8 2.6 H7.6" fill="none" stroke="#555" stroke-width="0.65"/></svg>
<div class="t" style="left:177.2px;top:402.60px;font-size:7.3px;font-weight:normal;color:#555;height:7.3px;line-height:7.3px;">Ethernet</div>
<div class="ab" style="left:157.8px;top:422.4px;width:5.8px;height:0.9px;background:#dcdcdc;"></div>
<svg class="ab" style="left:166.5px;top:418.8px" width="8.5" height="6.5" viewBox="0 0 8.5 6.5"><path d="M0.8 1 H3.2 L3.8 1.8 H7.6 V5.8 H0.8 Z M0.8 2.6 H7.6" fill="none" stroke="#555" stroke-width="0.65"/></svg>
<div class="t" style="left:177.2px;top:417.45px;font-size:7.3px;font-weight:normal;color:#555;height:7.3px;line-height:7.3px;">ETH-LOG</div>
<div class="ab" style="left:157.8px;top:437.2px;width:5.8px;height:0.9px;background:#dcdcdc;"></div>
<svg class="ab" style="left:166.5px;top:433.6px" width="8.5" height="6.5" viewBox="0 0 8.5 6.5"><path d="M0.8 1 H3.2 L3.8 1.8 H7.6 V5.8 H0.8 Z M0.8 2.6 H7.6" fill="none" stroke="#555" stroke-width="0.65"/></svg>
<div class="t" style="left:177.2px;top:432.30px;font-size:7.3px;font-weight:normal;color:#555;height:7.3px;line-height:7.3px;">FlexRay</div>
<div class="ab" style="left:157.8px;top:452.1px;width:5.8px;height:0.9px;background:#dcdcdc;"></div>
<svg class="ab" style="left:166.5px;top:448.5px" width="8.5" height="6.5" viewBox="0 0 8.5 6.5"><path d="M0.8 1 H3.2 L3.8 1.8 H7.6 V5.8 H0.8 Z M0.8 2.6 H7.6" fill="none" stroke="#555" stroke-width="0.65"/></svg>
<div class="t" style="left:177.2px;top:447.15px;font-size:7.3px;font-weight:normal;color:#555;height:7.3px;line-height:7.3px;">QXDM</div>
<div class="ab" style="left:157.8px;top:466.9px;width:5.8px;height:0.9px;background:#dcdcdc;"></div>
<svg class="ab" style="left:166.5px;top:463.3px" width="8.5" height="6.5" viewBox="0 0 8.5 6.5"><path d="M0.8 1 H3.2 L3.8 1.8 H7.6 V5.8 H0.8 Z M0.8 2.6 H7.6" fill="none" stroke="#555" stroke-width="0.65"/></svg>
<div class="t" style="left:177.2px;top:462.00px;font-size:7.3px;font-weight:normal;color:#555;height:7.3px;line-height:7.3px;">ADB</div>
<div class="ab" style="left:1251px;top:336.5px;width:4px;height:312.5px;background:#8593ad;"></div>
<div class="ab" style="left:240px;top:336px;width:1010px;height:325px;overflow:hidden">
<div class="t" style="left:5.9px;top:8.1px;font-size:6.4px;line-height:6.4px;color:#444">LIN#3 <span style="color:#3bbf6b">Running</span></div>
<div class="t" style="left:46.30000000000001px;width:200px;top:8.9px;font-size:5.25px;line-height:5.4px;color:#7a7a7a;text-align:right;word-spacing:0">Rate:34fps<span style="display:inline-block;width:7.2px"></span>Size:597.1M<span style="display:inline-block;width:7.2px"></span>Baud Rate:19200<span style="display:inline-block;width:6.5px"></span>Checksum:enhanced</div>
<svg class="ab" style="left:3px;top:19px;overflow:visible" width="249" height="91.4" viewBox="0 0 249 91.4"><g transform="translate(0.30,0.00)"><rect x="0.5" y="0.5" width="246" height="88.4" fill="#fff" stroke="#e4e4e4" stroke-width="1"/><defs><linearGradient id="g0" x1="0" y1="0" x2="0" y2="1"><stop offset="0" stop-color="#6189ea"/><stop offset="1" stop-color="#fafbff"/></linearGradient></defs><line x1="25.2" y1="9.30" x2="237.1" y2="9.30" stroke="#c6c6c6" stroke-width="0.85" stroke-dasharray="3.4 3"/><text transform="translate(21.00,11.40) scale(1,1.14)" font-size="6.3" fill="#707070" text-anchor="end" font-family="Liberation Sans">80fps</text><line x1="25.2" y1="25.55" x2="237.1" y2="25.55" stroke="#c6c6c6" stroke-width="0.85" stroke-dasharray="3.4 3"/><text transform="translate(21.00,27.65) scale(1,1.14)" font-size="6.3" fill="#707070" text-anchor="end" font-family="Liberation Sans">60fps</text><line x1="25.2" y1="41.80" x2="237.1" y2="41.80" stroke="#c6c6c6" stroke-width="0.85" stroke-dasharray="3.4 3"/><text transform="translate(21.00,43.90) scale(1,1.14)" font-size="6.3" fill="#707070" text-anchor="end" font-family="Liberation Sans">40fps</text><line x1="25.2" y1="58.05" x2="237.1" y2="58.05" stroke="#c6c6c6" stroke-width="0.85" stroke-dasharray="3.4 3"/><text transform="translate(21.00,60.15) scale(1,1.14)" font-size="6.3" fill="#707070" text-anchor="end" font-family="Liberation Sans">20fps</text><line x1="25.2" y1="74.30" x2="237.1" y2="74.30" stroke="#c6c6c6" stroke-width="0.85" stroke-dasharray="3.4 3"/><text transform="translate(21.00,76.40) scale(1,1.14)" font-size="6.3" fill="#707070" text-anchor="end" font-family="Liberation Sans">0fps</text><line x1="25.20" y1="74.3" x2="25.20" y2="9.3" stroke="#c6c6c6" stroke-width="0.85" stroke-dasharray="3.4 3"/><text transform="translate(25.20,83.70) scale(1,1.14)" font-size="6.3" fill="#707070" text-anchor="middle" font-family="Liberation Sans">60s</text><line x1="60.52" y1="74.3" x2="60.52" y2="9.3" stroke="#c6c6c6" stroke-width="0.85" stroke-dasharray="3.4 3"/><text transform="translate(60.52,83.70) scale(1,1.14)" font-size="6.3" fill="#707070" text-anchor="middle" font-family="Liberation Sans">50s</text><line x1="95.83" y1="74.3" x2="95.83" y2="9.3" stroke="#c6c6c6" stroke-width="0.85" stroke-dasharray="3.4 3"/><text transform="translate(95.83,83.70) scale(1,1.14)" font-size="6.3" fill="#707070" text-anchor="middle" font-family="Liberation Sans">40s</text><line x1="131.15" y1="74.3" x2="131.15" y2="9.3" stroke="#c6c6c6" stroke-width="0.85" stroke-dasharray="3.4 3"/><text transform="translate(131.15,83.70) scale(1,1.14)" font-size="6.3" fill="#707070" text-anchor="middle" font-family="Liberation Sans">30s</text><line x1="166.47" y1="74.3" x2="166.47" y2="9.3" stroke="#c6c6c6" stroke-width="0.85" stroke-dasharray="3.4 3"/><text transform="translate(166.47,83.70) scale(1,1.14)" font-size="6.3" fill="#707070" text-anchor="middle" font-family="Liberation Sans">20s</text><line x1="201.78" y1="74.3" x2="201.78" y2="9.3" stroke="#c6c6c6" stroke-width="0.85" stroke-dasharray="3.4 3"/><text transform="translate(201.78,83.70) scale(1,1.14)" font-size="6.3" fill="#707070" text-anchor="middle" font-family="Liberation Sans">10s</text><line x1="237.10" y1="74.3" x2="237.10" y2="9.3" stroke="#c6c6c6" stroke-width="0.85" stroke-dasharray="3.4 3"/><text transform="translate(237.10,83.70) scale(1,1.14)" font-size="6.3" fill="#707070" text-anchor="middle" font-family="Liberation Sans">0s</text><path d="M25.20 46.62 C27.04 46.41 28.88 46.00 30.72 46.00 C32.08 46.00 33.44 46.76 34.80 46.76 C36.17 46.76 37.53 46.62 38.89 46.62 C41.07 46.62 43.25 46.71 45.43 47.03 C46.11 47.13 46.79 50.69 47.47 53.80 C48.36 57.83 49.24 74.30 50.13 74.30 C50.61 74.30 51.08 66.46 51.56 62.00 C52.10 56.90 52.65 45.18 53.19 45.18 C54.69 45.18 56.19 45.18 57.69 45.18 C58.58 45.18 59.46 33.36 60.35 32.88 C61.03 32.51 61.71 32.27 62.39 32.27 C63.64 32.27 64.89 32.92 66.14 32.92 C67.38 32.92 68.63 32.23 69.88 32.23 C71.13 32.23 72.38 32.75 73.63 32.88 C74.76 33.00 75.90 33.13 77.03 33.13 C78.17 33.13 79.30 32.02 80.44 32.02 C81.57 32.02 82.71 32.15 83.85 32.27 C85.38 32.42 86.91 33.02 88.44 33.02 C89.98 33.02 91.51 32.88 93.04 32.88 C93.72 32.88 94.40 38.00 95.08 41.49 C96.45 48.48 97.81 70.20 99.17 70.20 C100.19 70.20 101.21 49.69 102.24 49.69 C103.60 49.69 104.96 52.15 106.32 52.15 C107.55 52.15 108.77 44.57 110.00 44.57 C111.50 44.57 113.00 46.32 114.50 46.62 C115.63 46.85 116.77 47.07 117.90 47.07 C119.04 47.07 120.17 46.17 121.31 46.17 C122.44 46.17 123.58 47.07 124.71 47.07 C125.85 47.07 126.98 46.17 128.12 46.17 C129.25 46.17 130.39 47.07 131.52 47.07 C132.66 47.07 133.80 46.62 134.93 46.62 C136.07 46.62 137.20 47.07 138.34 47.07 C139.47 47.07 140.61 46.17 141.74 46.17 C142.88 46.17 144.01 47.07 145.15 47.07 C146.28 47.07 147.42 46.17 148.55 46.17 C149.69 46.17 150.82 47.07 151.96 47.07 C153.09 47.07 154.23 46.62 155.36 46.62 C157.41 46.62 159.45 46.75 161.49 47.23 C162.18 47.39 162.86 57.52 163.54 62.00 C164.22 66.47 164.90 74.30 165.58 74.30 C166.94 74.30 168.31 72.66 169.67 72.66 C171.03 72.66 172.39 74.30 173.75 74.30 C174.78 74.30 175.80 64.50 176.82 57.90 C177.84 51.29 178.86 32.88 179.88 32.88 C181.25 32.88 182.61 33.02 183.97 33.02 C185.33 33.02 186.70 32.27 188.06 32.27 C189.19 32.27 190.33 33.06 191.46 33.06 C192.60 33.06 193.73 32.50 194.87 32.50 C196.01 32.50 197.14 32.80 198.28 33.29 C199.30 33.73 200.32 37.78 201.34 41.49 C202.70 46.45 204.07 61.53 205.43 66.10 C206.59 69.98 207.74 74.30 208.90 74.30 C209.99 74.30 211.08 73.83 212.17 73.27 C213.33 72.68 214.49 70.93 215.64 68.15 C216.67 65.70 217.69 52.44 218.71 49.69 C219.39 47.87 220.07 46.00 220.75 46.00 C222.12 46.00 223.48 46.76 224.84 46.76 C226.20 46.76 227.56 46.62 228.93 46.62 C230.29 46.62 231.65 47.07 233.01 47.07 C234.38 47.07 235.74 46.77 237.10 46.62 L237.1 74.3 L25.2 74.3 Z" fill="url(#g0)" stroke="none"/><g stroke="#c0c4cc" stroke-width="0.85" opacity="0.45"><line x1="25.2" y1="9.30" x2="237.1" y2="9.30" stroke-dasharray="3.4 3"/><line x1="25.2" y1="25.55" x2="237.1" y2="25.55" stroke-dasharray="3.4 3"/><line x1="25.2" y1="41.80" x2="237.1" y2="41.80" stroke-dasharray="3.4 3"/><line x1="25.2" y1="58.05" x2="237.1" y2="58.05" stroke-dasharray="3.4 3"/><line x1="25.2" y1="74.30" x2="237.1" y2="74.30" stroke-dasharray="3.4 3"/><line x1="25.20" y1="74.3" x2="25.20" y2="9.3" stroke-dasharray="3.4 3"/><line x1="60.52" y1="74.3" x2="60.52" y2="9.3" stroke-dasharray="3.4 3"/><line x1="95.83" y1="74.3" x2="95.83" y2="9.3" stroke-dasharray="3.4 3"/><line x1="131.15" y1="74.3" x2="131.15" y2="9.3" stroke-dasharray="3.4 3"/><line x1="166.47" y1="74.3" x2="166.47" y2="9.3" stroke-dasharray="3.4 3"/><line x1="201.78" y1="74.3" x2="201.78" y2="9.3" stroke-dasharray="3.4 3"/><line x1="237.10" y1="74.3" x2="237.10" y2="9.3" stroke-dasharray="3.4 3"/></g><path d="M25.20 46.62 C27.04 46.41 28.88 46.00 30.72 46.00 C32.08 46.00 33.44 46.76 34.80 46.76 C36.17 46.76 37.53 46.62 38.89 46.62 C41.07 46.62 43.25 46.71 45.43 47.03 C46.11 47.13 46.79 50.69 47.47 53.80 C48.36 57.83 49.24 74.30 50.13 74.30 C50.61 74.30 51.08 66.46 51.56 62.00 C52.10 56.90 52.65 45.18 53.19 45.18 C54.69 45.18 56.19 45.18 57.69 45.18 C58.58 45.18 59.46 33.36 60.35 32.88 C61.03 32.51 61.71 32.27 62.39 32.27 C63.64 32.27 64.89 32.92 66.14 32.92 C67.38 32.92 68.63 32.23 69.88 32.23 C71.13 32.23 72.38 32.75 73.63 32.88 C74.76 33.00 75.90 33.13 77.03 33.13 C78.17 33.13 79.30 32.02 80.44 32.02 C81.57 32.02 82.71 32.15 83.85 32.27 C85.38 32.42 86.91 33.02 88.44 33.02 C89.98 33.02 91.51 32.88 93.04 32.88 C93.72 32.88 94.40 38.00 95.08 41.49 C96.45 48.48 97.81 70.20 99.17 70.20 C100.19 70.20 101.21 49.69 102.24 49.69 C103.60 49.69 104.96 52.15 106.32 52.15 C107.55 52.15 108.77 44.57 110.00 44.57 C111.50 44.57 113.00 46.32 114.50 46.62 C115.63 46.85 116.77 47.07 117.90 47.07 C119.04 47.07 120.17 46.17 121.31 46.17 C122.44 46.17 123.58 47.07 124.71 47.07 C125.85 47.07 126.98 46.17 128.12 46.17 C129.25 46.17 130.39 47.07 131.52 47.07 C132.66 47.07 133.80 46.62 134.93 46.62 C136.07 46.62 137.20 47.07 138.34 47.07 C139.47 47.07 140.61 46.17 141.74 46.17 C142.88 46.17 144.01 47.07 145.15 47.07 C146.28 47.07 147.42 46.17 148.55 46.17 C149.69 46.17 150.82 47.07 151.96 47.07 C153.09 47.07 154.23 46.62 155.36 46.62 C157.41 46.62 159.45 46.75 161.49 47.23 C162.18 47.39 162.86 57.52 163.54 62.00 C164.22 66.47 164.90 74.30 165.58 74.30 C166.94 74.30 168.31 72.66 169.67 72.66 C171.03 72.66 172.39 74.30 173.75 74.30 C174.78 74.30 175.80 64.50 176.82 57.90 C177.84 51.29 178.86 32.88 179.88 32.88 C181.25 32.88 182.61 33.02 183.97 33.02 C185.33 33.02 186.70 32.27 188.06 32.27 C189.19 32.27 190.33 33.06 191.46 33.06 C192.60 33.06 193.73 32.50 194.87 32.50 C196.01 32.50 197.14 32.80 198.28 33.29 C199.30 33.73 200.32 37.78 201.34 41.49 C202.70 46.45 204.07 61.53 205.43 66.10 C206.59 69.98 207.74 74.30 208.90 74.30 C209.99 74.30 211.08 73.83 212.17 73.27 C213.33 72.68 214.49 70.93 215.64 68.15 C216.67 65.70 217.69 52.44 218.71 49.69 C219.39 47.87 220.07 46.00 220.75 46.00 C222.12 46.00 223.48 46.76 224.84 46.76 C226.20 46.76 227.56 46.62 228.93 46.62 C230.29 46.62 231.65 47.07 233.01 47.07 C234.38 47.07 235.74 46.77 237.10 46.62" fill="none" stroke="#3d6fe8" stroke-width="1.45"/></g></svg>
<div class="t" style="left:5.9px;top:119.9px;font-size:6.4px;line-height:6.4px;color:#444">LIN#1 <span style="color:#c8c8c8">Idle</span></div>
<div class="t" style="left:46.30000000000001px;width:200px;top:120.7px;font-size:5.25px;line-height:5.4px;color:#7a7a7a;text-align:right;word-spacing:0">Rate:0fps<span style="display:inline-block;width:7.2px"></span>Size:0 B<span style="display:inline-block;width:7.2px"></span>Baud Rate:19200<span style="display:inline-block;width:6.5px"></span>Checksum:enhanced</div>
<svg class="ab" style="left:3px;top:132px;overflow:visible" width="249" height="91.4" viewBox="0 0 249 91.4"><g transform="translate(0.30,0.00)"><rect x="0.5" y="0.5" width="246" height="88.4" fill="#fff" stroke="#e4e4e4" stroke-width="1"/><line x1="22.00" y1="72.7" x2="22.00" y2="7.1" stroke="#c6c6c6" stroke-width="0.85" stroke-dasharray="3.4 3"/><text transform="translate(22.00,82.50) scale(1,1.14)" font-size="6.3" fill="#707070" text-anchor="middle" font-family="Liberation Sans">60s</text><line x1="57.85" y1="72.7" x2="57.85" y2="7.1" stroke="#c6c6c6" stroke-width="0.85" stroke-dasharray="3.4 3"/><text transform="translate(57.85,82.50) scale(1,1.14)" font-size="6.3" fill="#707070" text-anchor="middle" font-family="Liberation Sans">50s</text><line x1="93.70" y1="72.7" x2="93.70" y2="7.1" stroke="#c6c6c6" stroke-width="0.85" stroke-dasharray="3.4 3"/><text transform="translate(93.70,82.50) scale(1,1.14)" font-size="6.3" fill="#707070" text-anchor="middle" font-family="Liberation Sans">40s</text><line x1="129.55" y1="72.7" x2="129.55" y2="7.1" stroke="#c6c6c6" stroke-width="0.85" stroke-dasharray="3.4 3"/><text transform="translate(129.55,82.50) scale(1,1.14)" font-size="6.3" fill="#707070" text-anchor="middle" font-family="Liberation Sans">30s</text><line x1="165.40" y1="72.7" x2="165.40" y2="7.1" stroke="#c6c6c6" stroke-width="0.85" stroke-dasharray="3.4 3"/><text transform="translate(165.40,82.50) scale(1,1.14)" font-size="6.3" fill="#707070" text-anchor="middle" font-family="Liberation Sans">20s</text><line x1="201.25" y1="72.7" x2="201.25" y2="7.1" stroke="#c6c6c6" stroke-width="0.85" stroke-dasharray="3.4 3"/><text transform="translate(201.25,82.50) scale(1,1.14)" font-size="6.3" fill="#707070" text-anchor="middle" font-family="Liberation Sans">10s</text><line x1="237.10" y1="72.7" x2="237.10" y2="7.1" stroke="#c6c6c6" stroke-width="0.85" stroke-dasharray="3.4 3"/><text transform="translate(237.10,82.50) scale(1,1.14)" font-size="6.3" fill="#707070" text-anchor="middle" font-family="Liberation Sans">0s</text><text transform="translate(18.50,74.90) scale(1,1.14)" font-size="6.3" fill="#707070" text-anchor="end" font-family="Liberation Sans">0fps</text><line x1="22" y1="73.0" x2="237.1" y2="73.0" stroke="#7fa0ef" stroke-width="1.3"/></g></svg>
<div class="t" style="left:5.9px;top:232.5px;font-size:6.4px;line-height:6.4px;color:#444">LIN#9 <span style="color:#c8c8c8">Idle</span></div>
<div class="t" style="left:46.30000000000001px;width:200px;top:233.3px;font-size:5.25px;line-height:5.4px;color:#7a7a7a;text-align:right;word-spacing:0">Rate:0fps<span style="display:inline-block;width:7.2px"></span>Size:0 B<span style="display:inline-block;width:7.2px"></span>Baud Rate:19200<span style="display:inline-block;width:6.5px"></span>Checksum:enhanced</div>
<svg class="ab" style="left:3px;top:244px;overflow:visible" width="249" height="91.4" viewBox="0 0 249 91.4"><g transform="translate(0.30,0.20)"><rect x="0.5" y="0.5" width="246" height="88.4" fill="#fff" stroke="#e4e4e4" stroke-width="1"/><line x1="22.00" y1="72.9" x2="22.00" y2="7.1" stroke="#c6c6c6" stroke-width="0.85" stroke-dasharray="3.4 3"/><text transform="translate(22.00,82.70) scale(1,1.14)" font-size="6.3" fill="#707070" text-anchor="middle" font-family="Liberation Sans">60s</text><line x1="57.85" y1="72.9" x2="57.85" y2="7.1" stroke="#c6c6c6" stroke-width="0.85" stroke-dasharray="3.4 3"/><text transform="translate(57.85,82.70) scale(1,1.14)" font-size="6.3" fill="#707070" text-anchor="middle" font-family="Liberation Sans">50s</text><line x1="93.70" y1="72.9" x2="93.70" y2="7.1" stroke="#c6c6c6" stroke-width="0.85" stroke-dasharray="3.4 3"/><text transform="translate(93.70,82.70) scale(1,1.14)" font-size="6.3" fill="#707070" text-anchor="middle" font-family="Liberation Sans">40s</text><line x1="129.55" y1="72.9" x2="129.55" y2="7.1" stroke="#c6c6c6" stroke-width="0.85" stroke-dasharray="3.4 3"/><text transform="translate(129.55,82.70) scale(1,1.14)" font-size="6.3" fill="#707070" text-anchor="middle" font-family="Liberation Sans">30s</text><line x1="165.40" y1="72.9" x2="165.40" y2="7.1" stroke="#c6c6c6" stroke-width="0.85" stroke-dasharray="3.4 3"/><text transform="translate(165.40,82.70) scale(1,1.14)" font-size="6.3" fill="#707070" text-anchor="middle" font-family="Liberation Sans">20s</text><line x1="201.25" y1="72.9" x2="201.25" y2="7.1" stroke="#c6c6c6" stroke-width="0.85" stroke-dasharray="3.4 3"/><text transform="translate(201.25,82.70) scale(1,1.14)" font-size="6.3" fill="#707070" text-anchor="middle" font-family="Liberation Sans">10s</text><line x1="237.10" y1="72.9" x2="237.10" y2="7.1" stroke="#c6c6c6" stroke-width="0.85" stroke-dasharray="3.4 3"/><text transform="translate(237.10,82.70) scale(1,1.14)" font-size="6.3" fill="#707070" text-anchor="middle" font-family="Liberation Sans">0s</text><text transform="translate(18.50,75.10) scale(1,1.14)" font-size="6.3" fill="#707070" text-anchor="end" font-family="Liberation Sans">0fps</text><line x1="22" y1="73.2" x2="237.1" y2="73.2" stroke="#7fa0ef" stroke-width="1.3"/></g></svg>
<div class="t" style="left:258.1px;top:8.1px;font-size:6.4px;line-height:6.4px;color:#444">LIN#5 <span style="color:#3bbf6b">Running</span></div>
<div class="t" style="left:298.5px;width:200px;top:8.9px;font-size:5.25px;line-height:5.4px;color:#7a7a7a;text-align:right;word-spacing:0">Rate:34fps<span style="display:inline-block;width:7.2px"></span>Size:1.1M<span style="display:inline-block;width:7.2px"></span>Baud Rate:19200<span style="display:inline-block;width:6.5px"></span>Checksum:enhanced</div>
<svg class="ab" style="left:255px;top:19px;overflow:visible" width="249" height="91.4" viewBox="0 0 249 91.4"><g transform="translate(0.50,0.00)"><rect x="0.5" y="0.5" width="246" height="88.4" fill="#fff" stroke="#e4e4e4" stroke-width="1"/><defs><linearGradient id="g1" x1="0" y1="0" x2="0" y2="1"><stop offset="0" stop-color="#6189ea"/><stop offset="1" stop-color="#fafbff"/></linearGradient></defs><line x1="25.2" y1="9.30" x2="237.7" y2="9.30" stroke="#c6c6c6" stroke-width="0.85" stroke-dasharray="3.4 3"/><text transform="translate(21.00,11.40) scale(1,1.14)" font-size="6.3" fill="#707070" text-anchor="end" font-family="Liberation Sans">80fps</text><line x1="25.2" y1="25.55" x2="237.7" y2="25.55" stroke="#c6c6c6" stroke-width="0.85" stroke-dasharray="3.4 3"/><text transform="translate(21.00,27.65) scale(1,1.14)" font-size="6.3" fill="#707070" text-anchor="end" font-family="Liberation Sans">60fps</text><line x1="25.2" y1="41.80" x2="237.7" y2="41.80" stroke="#c6c6c6" stroke-width="0.85" stroke-dasharray="3.4 3"/><text transform="translate(21.00,43.90) scale(1,1.14)" font-size="6.3" fill="#707070" text-anchor="end" font-family="Liberation Sans">40fps</text><line x1="25.2" y1="58.05" x2="237.7" y2="58.05" stroke="#c6c6c6" stroke-width="0.85" stroke-dasharray="3.4 3"/><text transform="translate(21.00,60.15) scale(1,1.14)" font-size="6.3" fill="#707070" text-anchor="end" font-family="Liberation Sans">20fps</text><line x1="25.2" y1="74.30" x2="237.7" y2="74.30" stroke="#c6c6c6" stroke-width="0.85" stroke-dasharray="3.4 3"/><text transform="translate(21.00,76.40) scale(1,1.14)" font-size="6.3" fill="#707070" text-anchor="end" font-family="Liberation Sans">0fps</text><line x1="25.20" y1="74.3" x2="25.20" y2="9.3" stroke="#c6c6c6" stroke-width="0.85" stroke-dasharray="3.4 3"/><text transform="translate(25.20,83.70) scale(1,1.14)" font-size="6.3" fill="#707070" text-anchor="middle" font-family="Liberation Sans">60s</text><line x1="60.62" y1="74.3" x2="60.62" y2="9.3" stroke="#c6c6c6" stroke-width="0.85" stroke-dasharray="3.4 3"/><text transform="translate(60.62,83.70) scale(1,1.14)" font-size="6.3" fill="#707070" text-anchor="middle" font-family="Liberation Sans">50s</text><line x1="96.03" y1="74.3" x2="96.03" y2="9.3" stroke="#c6c6c6" stroke-width="0.85" stroke-dasharray="3.4 3"/><text transform="translate(96.03,83.70) scale(1,1.14)" font-size="6.3" fill="#707070" text-anchor="middle" font-family="Liberation Sans">40s</text><line x1="131.45" y1="74.3" x2="131.45" y2="9.3" stroke="#c6c6c6" stroke-width="0.85" stroke-dasharray="3.4 3"/><text transform="translate(131.45,83.70) scale(1,1.14)" font-size="6.3" fill="#707070" text-anchor="middle" font-family="Liberation Sans">30s</text><line x1="166.87" y1="74.3" x2="166.87" y2="9.3" stroke="#c6c6c6" stroke-width="0.85" stroke-dasharray="3.4 3"/><text transform="translate(166.87,83.70) scale(1,1.14)" font-size="6.3" fill="#707070" text-anchor="middle" font-family="Liberation Sans">20s</text><line x1="202.28" y1="74.3" x2="202.28" y2="9.3" stroke="#c6c6c6" stroke-width="0.85" stroke-dasharray="3.4 3"/><text transform="translate(202.28,83.70) scale(1,1.14)" font-size="6.3" fill="#707070" text-anchor="middle" font-family="Liberation Sans">10s</text><line x1="237.70" y1="74.3" x2="237.70" y2="9.3" stroke="#c6c6c6" stroke-width="0.85" stroke-dasharray="3.4 3"/><text transform="translate(237.70,83.70) scale(1,1.14)" font-size="6.3" fill="#707070" text-anchor="middle" font-family="Liberation Sans">0s</text><path d="M25.20 46.62 C26.34 46.70 27.47 46.86 28.61 46.86 C29.74 46.86 30.88 45.76 32.01 45.76 C33.15 45.76 34.28 45.88 35.42 46.00 C36.95 46.16 38.48 46.93 40.01 46.97 C41.55 47.01 43.08 46.98 44.61 47.03 C45.50 47.06 46.38 50.49 47.27 53.80 C48.22 57.36 49.17 74.30 50.13 74.30 C50.67 74.30 51.22 61.18 51.76 57.90 C52.44 53.79 53.12 49.28 53.81 49.28 C54.83 49.28 55.85 52.15 56.87 52.15 C57.76 52.15 58.64 50.43 59.53 47.64 C60.00 46.15 60.48 33.09 60.96 32.88 C61.98 32.43 63.00 32.27 64.02 32.27 C66.41 32.27 68.79 34.32 71.17 34.32 C72.20 34.32 73.22 32.27 74.24 32.27 C75.60 32.27 76.96 33.02 78.32 33.02 C79.69 33.02 81.05 32.88 82.41 32.88 C83.55 32.88 84.68 33.13 85.82 33.13 C86.95 33.13 88.09 32.02 89.22 32.02 C90.36 32.02 91.49 32.08 92.63 32.27 C93.17 32.35 93.72 36.13 94.26 39.44 C95.08 44.41 95.90 63.12 96.71 66.10 C97.60 69.32 98.49 71.84 99.37 71.84 C100.19 71.84 101.01 59.45 101.82 58.92 C102.84 58.26 103.87 57.90 104.89 57.90 C105.77 57.90 106.66 57.90 107.54 57.90 C108.16 57.90 108.77 45.18 109.38 45.18 C110.61 45.18 111.83 47.23 113.06 47.23 C114.42 47.23 115.78 47.23 117.15 47.23 C118.51 47.23 119.87 51.74 121.23 51.74 C122.12 51.74 123.00 46.21 123.89 46.21 C125.03 46.21 126.17 46.76 127.31 46.76 C128.45 46.76 129.59 45.96 130.73 45.96 C131.88 45.96 133.02 46.97 134.16 46.97 C135.30 46.97 136.44 46.62 137.58 46.62 C138.67 46.62 139.76 46.95 140.85 46.95 C141.94 46.95 143.03 45.92 144.12 45.92 C145.21 45.92 146.30 46.70 147.39 46.70 C148.48 46.70 149.57 45.68 150.66 45.68 C151.75 45.68 152.84 45.85 153.93 46.00 C155.97 46.29 158.01 46.50 160.06 47.64 C161.08 48.22 162.10 57.58 163.12 62.00 C164.14 66.41 165.16 74.30 166.19 74.30 C167.55 74.30 168.91 72.66 170.27 72.66 C171.97 72.66 173.68 74.30 175.38 74.30 C176.27 74.30 177.15 64.73 178.04 57.90 C178.85 51.59 179.67 32.88 180.49 32.88 C181.85 32.88 183.21 33.02 184.57 33.02 C185.94 33.02 187.30 32.27 188.66 32.27 C189.68 32.27 190.70 34.73 191.73 34.73 C192.75 34.73 193.77 32.27 194.79 32.27 C196.49 32.27 198.20 32.45 199.90 32.88 C200.92 33.14 201.94 37.15 202.96 41.49 C203.99 45.83 205.01 63.72 206.03 68.15 C206.71 71.10 207.39 74.30 208.07 74.30 C209.09 74.30 210.12 74.12 211.14 73.89 C212.84 73.51 214.54 71.71 216.25 68.15 C217.13 66.29 218.02 51.87 218.90 49.69 C219.72 47.69 220.54 46.00 221.35 46.00 C222.72 46.00 224.08 46.76 225.44 46.76 C226.80 46.76 228.16 46.62 229.53 46.62 C230.89 46.62 232.25 47.07 233.61 47.07 C234.98 47.07 236.34 46.77 237.70 46.62 L237.7 74.3 L25.2 74.3 Z" fill="url(#g1)" stroke="none"/><g stroke="#c0c4cc" stroke-width="0.85" opacity="0.45"><line x1="25.2" y1="9.30" x2="237.7" y2="9.30" stroke-dasharray="3.4 3"/><line x1="25.2" y1="25.55" x2="237.7" y2="25.55" stroke-dasharray="3.4 3"/><line x1="25.2" y1="41.80" x2="237.7" y2="41.80" stroke-dasharray="3.4 3"/><line x1="25.2" y1="58.05" x2="237.7" y2="58.05" stroke-dasharray="3.4 3"/><line x1="25.2" y1="74.30" x2="237.7" y2="74.30" stroke-dasharray="3.4 3"/><line x1="25.20" y1="74.3" x2="25.20" y2="9.3" stroke-dasharray="3.4 3"/><line x1="60.62" y1="74.3" x2="60.62" y2="9.3" stroke-dasharray="3.4 3"/><line x1="96.03" y1="74.3" x2="96.03" y2="9.3" stroke-dasharray="3.4 3"/><line x1="131.45" y1="74.3" x2="131.45" y2="9.3" stroke-dasharray="3.4 3"/><line x1="166.87" y1="74.3" x2="166.87" y2="9.3" stroke-dasharray="3.4 3"/><line x1="202.28" y1="74.3" x2="202.28" y2="9.3" stroke-dasharray="3.4 3"/><line x1="237.70" y1="74.3" x2="237.70" y2="9.3" stroke-dasharray="3.4 3"/></g><path d="M25.20 46.62 C26.34 46.70 27.47 46.86 28.61 46.86 C29.74 46.86 30.88 45.76 32.01 45.76 C33.15 45.76 34.28 45.88 35.42 46.00 C36.95 46.16 38.48 46.93 40.01 46.97 C41.55 47.01 43.08 46.98 44.61 47.03 C45.50 47.06 46.38 50.49 47.27 53.80 C48.22 57.36 49.17 74.30 50.13 74.30 C50.67 74.30 51.22 61.18 51.76 57.90 C52.44 53.79 53.12 49.28 53.81 49.28 C54.83 49.28 55.85 52.15 56.87 52.15 C57.76 52.15 58.64 50.43 59.53 47.64 C60.00 46.15 60.48 33.09 60.96 32.88 C61.98 32.43 63.00 32.27 64.02 32.27 C66.41 32.27 68.79 34.32 71.17 34.32 C72.20 34.32 73.22 32.27 74.24 32.27 C75.60 32.27 76.96 33.02 78.32 33.02 C79.69 33.02 81.05 32.88 82.41 32.88 C83.55 32.88 84.68 33.13 85.82 33.13 C86.95 33.13 88.09 32.02 89.22 32.02 C90.36 32.02 91.49 32.08 92.63 32.27 C93.17 32.35 93.72 36.13 94.26 39.44 C95.08 44.41 95.90 63.12 96.71 66.10 C97.60 69.32 98.49 71.84 99.37 71.84 C100.19 71.84 101.01 59.45 101.82 58.92 C102.84 58.26 103.87 57.90 104.89 57.90 C105.77 57.90 106.66 57.90 107.54 57.90 C108.16 57.90 108.77 45.18 109.38 45.18 C110.61 45.18 111.83 47.23 113.06 47.23 C114.42 47.23 115.78 47.23 117.15 47.23 C118.51 47.23 119.87 51.74 121.23 51.74 C122.12 51.74 123.00 46.21 123.89 46.21 C125.03 46.21 126.17 46.76 127.31 46.76 C128.45 46.76 129.59 45.96 130.73 45.96 C131.88 45.96 133.02 46.97 134.16 46.97 C135.30 46.97 136.44 46.62 137.58 46.62 C138.67 46.62 139.76 46.95 140.85 46.95 C141.94 46.95 143.03 45.92 144.12 45.92 C145.21 45.92 146.30 46.70 147.39 46.70 C148.48 46.70 149.57 45.68 150.66 45.68 C151.75 45.68 152.84 45.85 153.93 46.00 C155.97 46.29 158.01 46.50 160.06 47.64 C161.08 48.22 162.10 57.58 163.12 62.00 C164.14 66.41 165.16 74.30 166.19 74.30 C167.55 74.30 168.91 72.66 170.27 72.66 C171.97 72.66 173.68 74.30 175.38 74.30 C176.27 74.30 177.15 64.73 178.04 57.90 C178.85 51.59 179.67 32.88 180.49 32.88 C181.85 32.88 183.21 33.02 184.57 33.02 C185.94 33.02 187.30 32.27 188.66 32.27 C189.68 32.27 190.70 34.73 191.73 34.73 C192.75 34.73 193.77 32.27 194.79 32.27 C196.49 32.27 198.20 32.45 199.90 32.88 C200.92 33.14 201.94 37.15 202.96 41.49 C203.99 45.83 205.01 63.72 206.03 68.15 C206.71 71.10 207.39 74.30 208.07 74.30 C209.09 74.30 210.12 74.12 211.14 73.89 C212.84 73.51 214.54 71.71 216.25 68.15 C217.13 66.29 218.02 51.87 218.90 49.69 C219.72 47.69 220.54 46.00 221.35 46.00 C222.72 46.00 224.08 46.76 225.44 46.76 C226.80 46.76 228.16 46.62 229.53 46.62 C230.89 46.62 232.25 47.07 233.61 47.07 C234.98 47.07 236.34 46.77 237.70 46.62" fill="none" stroke="#3d6fe8" stroke-width="1.45"/></g></svg>
<div class="t" style="left:258.1px;top:119.9px;font-size:6.4px;line-height:6.4px;color:#444">LIN#2 <span style="color:#c8c8c8">Idle</span></div>
<div class="t" style="left:298.5px;width:200px;top:120.7px;font-size:5.25px;line-height:5.4px;color:#7a7a7a;text-align:right;word-spacing:0">Rate:0fps<span style="display:inline-block;width:7.2px"></span>Size:0 B<span style="display:inline-block;width:7.2px"></span>Baud Rate:19200<span style="display:inline-block;width:6.5px"></span>Checksum:enhanced</div>
<svg class="ab" style="left:255px;top:132px;overflow:visible" width="249" height="91.4" viewBox="0 0 249 91.4"><g transform="translate(0.50,0.00)"><rect x="0.5" y="0.5" width="246" height="88.4" fill="#fff" stroke="#e4e4e4" stroke-width="1"/><line x1="22.00" y1="72.7" x2="22.00" y2="7.1" stroke="#c6c6c6" stroke-width="0.85" stroke-dasharray="3.4 3"/><text transform="translate(22.00,82.50) scale(1,1.14)" font-size="6.3" fill="#707070" text-anchor="middle" font-family="Liberation Sans">60s</text><line x1="57.95" y1="72.7" x2="57.95" y2="7.1" stroke="#c6c6c6" stroke-width="0.85" stroke-dasharray="3.4 3"/><text transform="translate(57.95,82.50) scale(1,1.14)" font-size="6.3" fill="#707070" text-anchor="middle" font-family="Liberation Sans">50s</text><line x1="93.90" y1="72.7" x2="93.90" y2="7.1" stroke="#c6c6c6" stroke-width="0.85" stroke-dasharray="3.4 3"/><text transform="translate(93.90,82.50) scale(1,1.14)" font-size="6.3" fill="#707070" text-anchor="middle" font-family="Liberation Sans">40s</text><line x1="129.85" y1="72.7" x2="129.85" y2="7.1" stroke="#c6c6c6" stroke-width="0.85" stroke-dasharray="3.4 3"/><text transform="translate(129.85,82.50) scale(1,1.14)" font-size="6.3" fill="#707070" text-anchor="middle" font-family="Liberation Sans">30s</text><line x1="165.80" y1="72.7" x2="165.80" y2="7.1" stroke="#c6c6c6" stroke-width="0.85" stroke-dasharray="3.4 3"/><text transform="translate(165.80,82.50) scale(1,1.14)" font-size="6.3" fill="#707070" text-anchor="middle" font-family="Liberation Sans">20s</text><line x1="201.75" y1="72.7" x2="201.75" y2="7.1" stroke="#c6c6c6" stroke-width="0.85" stroke-dasharray="3.4 3"/><text transform="translate(201.75,82.50) scale(1,1.14)" font-size="6.3" fill="#707070" text-anchor="middle" font-family="Liberation Sans">10s</text><line x1="237.70" y1="72.7" x2="237.70" y2="7.1" stroke="#c6c6c6" stroke-width="0.85" stroke-dasharray="3.4 3"/><text transform="translate(237.70,82.50) scale(1,1.14)" font-size="6.3" fill="#707070" text-anchor="middle" font-family="Liberation Sans">0s</text><text transform="translate(18.50,74.90) scale(1,1.14)" font-size="6.3" fill="#707070" text-anchor="end" font-family="Liberation Sans">0fps</text><line x1="22" y1="73.0" x2="237.7" y2="73.0" stroke="#7fa0ef" stroke-width="1.3"/></g></svg>
<div class="t" style="left:258.1px;top:232.5px;font-size:6.4px;line-height:6.4px;color:#444">LIN#10 <span style="color:#c8c8c8">Idle</span></div>
<div class="t" style="left:298.5px;width:200px;top:233.3px;font-size:5.25px;line-height:5.4px;color:#7a7a7a;text-align:right;word-spacing:0">Rate:0fps<span style="display:inline-block;width:7.2px"></span>Size:0 B<span style="display:inline-block;width:7.2px"></span>Baud Rate:19200<span style="display:inline-block;width:6.5px"></span>Checksum:enhanced</div>
<svg class="ab" style="left:255px;top:244px;overflow:visible" width="249" height="91.4" viewBox="0 0 249 91.4"><g transform="translate(0.50,0.20)"><rect x="0.5" y="0.5" width="246" height="88.4" fill="#fff" stroke="#e4e4e4" stroke-width="1"/><line x1="22.00" y1="72.9" x2="22.00" y2="7.1" stroke="#c6c6c6" stroke-width="0.85" stroke-dasharray="3.4 3"/><text transform="translate(22.00,82.70) scale(1,1.14)" font-size="6.3" fill="#707070" text-anchor="middle" font-family="Liberation Sans">60s</text><line x1="57.95" y1="72.9" x2="57.95" y2="7.1" stroke="#c6c6c6" stroke-width="0.85" stroke-dasharray="3.4 3"/><text transform="translate(57.95,82.70) scale(1,1.14)" font-size="6.3" fill="#707070" text-anchor="middle" font-family="Liberation Sans">50s</text><line x1="93.90" y1="72.9" x2="93.90" y2="7.1" stroke="#c6c6c6" stroke-width="0.85" stroke-dasharray="3.4 3"/><text transform="translate(93.90,82.70) scale(1,1.14)" font-size="6.3" fill="#707070" text-anchor="middle" font-family="Liberation Sans">40s</text><line x1="129.85" y1="72.9" x2="129.85" y2="7.1" stroke="#c6c6c6" stroke-width="0.85" stroke-dasharray="3.4 3"/><text transform="translate(129.85,82.70) scale(1,1.14)" font-size="6.3" fill="#707070" text-anchor="middle" font-family="Liberation Sans">30s</text><line x1="165.80" y1="72.9" x2="165.80" y2="7.1" stroke="#c6c6c6" stroke-width="0.85" stroke-dasharray="3.4 3"/><text transform="translate(165.80,82.70) scale(1,1.14)" font-size="6.3" fill="#707070" text-anchor="middle" font-family="Liberation Sans">20s</text><line x1="201.75" y1="72.9" x2="201.75" y2="7.1" stroke="#c6c6c6" stroke-width="0.85" stroke-dasharray="3.4 3"/><text transform="translate(201.75,82.70) scale(1,1.14)" font-size="6.3" fill="#707070" text-anchor="middle" font-family="Liberation Sans">10s</text><line x1="237.70" y1="72.9" x2="237.70" y2="7.1" stroke="#c6c6c6" stroke-width="0.85" stroke-dasharray="3.4 3"/><text transform="translate(237.70,82.70) scale(1,1.14)" font-size="6.3" fill="#707070" text-anchor="middle" font-family="Liberation Sans">0s</text><text transform="translate(18.50,75.10) scale(1,1.14)" font-size="6.3" fill="#707070" text-anchor="end" font-family="Liberation Sans">0fps</text><line x1="22" y1="73.2" x2="237.7" y2="73.2" stroke="#7fa0ef" stroke-width="1.3"/></g></svg>
<div class="t" style="left:511.1px;top:8.1px;font-size:6.4px;line-height:6.4px;color:#444">LIN#6 <span style="color:#3bbf6b">Running</span></div>
<div class="t" style="left:551.5px;width:200px;top:8.9px;font-size:5.25px;line-height:5.4px;color:#7a7a7a;text-align:right;word-spacing:0">Rate:34fps<span style="display:inline-block;width:7.2px"></span>Size:531.9K<span style="display:inline-block;width:7.2px"></span>Baud Rate:19200<span style="display:inline-block;width:6.5px"></span>Checksum:enhanced</div>
<svg class="ab" style="left:508px;top:19px;overflow:visible" width="249" height="91.4" viewBox="0 0 249 91.4"><g transform="translate(0.50,0.00)"><rect x="0.5" y="0.5" width="246" height="88.4" fill="#fff" stroke="#e4e4e4" stroke-width="1"/><defs><linearGradient id="g2" x1="0" y1="0" x2="0" y2="1"><stop offset="0" stop-color="#6189ea"/><stop offset="1" stop-color="#fafbff"/></linearGradient></defs><line x1="25.2" y1="9.30" x2="237.7" y2="9.30" stroke="#c6c6c6" stroke-width="0.85" stroke-dasharray="3.4 3"/><text transform="translate(21.00,11.40) scale(1,1.14)" font-size="6.3" fill="#707070" text-anchor="end" font-family="Liberation Sans">80fps</text><line x1="25.2" y1="25.55" x2="237.7" y2="25.55" stroke="#c6c6c6" stroke-width="0.85" stroke-dasharray="3.4 3"/><text transform="translate(21.00,27.65) scale(1,1.14)" font-size="6.3" fill="#707070" text-anchor="end" font-family="Liberation Sans">60fps</text><line x1="25.2" y1="41.80" x2="237.7" y2="41.80" stroke="#c6c6c6" stroke-width="0.85" stroke-dasharray="3.4 3"/><text transform="translate(21.00,43.90) scale(1,1.14)" font-size="6.3" fill="#707070" text-anchor="end" font-family="Liberation Sans">40fps</text><line x1="25.2" y1="58.05" x2="237.7" y2="58.05" stroke="#c6c6c6" stroke-width="0.85" stroke-dasharray="3.4 3"/><text transform="translate(21.00,60.15) scale(1,1.14)" font-size="6.3" fill="#707070" text-anchor="end" font-family="Liberation Sans">20fps</text><line x1="25.2" y1="74.30" x2="237.7" y2="74.30" stroke="#c6c6c6" stroke-width="0.85" stroke-dasharray="3.4 3"/><text transform="translate(21.00,76.40) scale(1,1.14)" font-size="6.3" fill="#707070" text-anchor="end" font-family="Liberation Sans">0fps</text><line x1="25.20" y1="74.3" x2="25.20" y2="9.3" stroke="#c6c6c6" stroke-width="0.85" stroke-dasharray="3.4 3"/><text transform="translate(25.20,83.70) scale(1,1.14)" font-size="6.3" fill="#707070" text-anchor="middle" font-family="Liberation Sans">60s</text><line x1="60.62" y1="74.3" x2="60.62" y2="9.3" stroke="#c6c6c6" stroke-width="0.85" stroke-dasharray="3.4 3"/><text transform="translate(60.62,83.70) scale(1,1.14)" font-size="6.3" fill="#707070" text-anchor="middle" font-family="Liberation Sans">50s</text><line x1="96.03" y1="74.3" x2="96.03" y2="9.3" stroke="#c6c6c6" stroke-width="0.85" stroke-dasharray="3.4 3"/><text transform="translate(96.03,83.70) scale(1,1.14)" font-size="6.3" fill="#707070" text-anchor="middle" font-family="Liberation Sans">40s</text><line x1="131.45" y1="74.3" x2="131.45" y2="9.3" stroke="#c6c6c6" stroke-width="0.85" stroke-dasharray="3.4 3"/><text transform="translate(131.45,83.70) scale(1,1.14)" font-size="6.3" fill="#707070" text-anchor="middle" font-family="Liberation Sans">30s</text><line x1="166.87" y1="74.3" x2="166.87" y2="9.3" stroke="#c6c6c6" stroke-width="0.85" stroke-dasharray="3.4 3"/><text transform="translate(166.87,83.70) scale(1,1.14)" font-size="6.3" fill="#707070" text-anchor="middle" font-family="Liberation Sans">20s</text><line x1="202.28" y1="74.3" x2="202.28" y2="9.3" stroke="#c6c6c6" stroke-width="0.85" stroke-dasharray="3.4 3"/><text transform="translate(202.28,83.70) scale(1,1.14)" font-size="6.3" fill="#707070" text-anchor="middle" font-family="Liberation Sans">10s</text><line x1="237.70" y1="74.3" x2="237.70" y2="9.3" stroke="#c6c6c6" stroke-width="0.85" stroke-dasharray="3.4 3"/><text transform="translate(237.70,83.70) scale(1,1.14)" font-size="6.3" fill="#707070" text-anchor="middle" font-family="Liberation Sans">0s</text><path d="M25.20 46.62 C26.56 46.70 27.92 46.86 29.29 46.86 C30.65 46.86 32.01 45.76 33.37 45.76 C34.74 45.76 36.10 45.87 37.46 46.00 C38.65 46.12 39.84 46.93 41.04 46.97 C42.23 47.01 43.42 46.99 44.61 47.03 C45.63 47.07 46.65 56.94 47.68 62.00 C48.49 66.04 49.31 74.30 50.13 74.30 C51.01 74.30 51.90 58.92 52.78 58.92 C53.81 58.92 54.83 61.40 55.85 62.00 C56.67 62.47 57.48 63.02 58.30 63.02 C58.85 63.02 59.39 34.93 59.94 34.93 C61.13 34.93 62.32 35.07 63.51 35.07 C64.70 35.07 65.90 34.32 67.09 34.32 C67.77 34.32 68.45 34.76 69.13 35.34 C69.81 35.92 70.49 41.08 71.17 41.08 C72.20 41.08 73.22 32.88 74.24 32.88 C75.60 32.88 76.96 33.02 78.32 33.02 C79.69 33.02 81.05 32.27 82.41 32.27 C83.55 32.27 84.68 32.92 85.82 32.92 C86.95 32.92 88.09 32.23 89.22 32.23 C90.36 32.23 91.49 32.41 92.63 32.88 C93.17 33.11 93.72 37.80 94.26 41.49 C95.08 47.02 95.90 63.14 96.71 66.10 C97.74 69.79 98.76 72.66 99.78 72.66 C100.80 72.66 101.82 66.30 102.84 66.10 C104.21 65.83 105.57 65.97 106.93 65.69 C107.95 65.48 108.97 45.18 110.00 45.18 C111.02 45.18 112.04 48.67 113.06 48.67 C114.97 48.67 116.87 48.67 118.78 48.67 C119.60 48.67 120.42 60.97 121.23 60.97 C122.05 60.97 122.87 46.21 123.69 46.21 C125.01 46.21 126.34 46.76 127.67 46.76 C129.00 46.76 130.33 45.96 131.65 45.96 C132.98 45.96 134.31 46.97 135.64 46.97 C136.97 46.97 138.29 46.62 139.62 46.62 C140.71 46.62 141.80 46.95 142.89 46.95 C143.98 46.95 145.07 45.92 146.16 45.92 C147.25 45.92 148.34 46.70 149.43 46.70 C150.52 46.70 151.61 45.68 152.70 45.68 C153.79 45.68 154.88 45.81 155.97 46.00 C157.33 46.24 158.69 47.48 160.06 49.69 C161.08 51.36 162.10 64.77 163.12 68.15 C164.01 71.08 164.89 74.30 165.78 74.30 C167.28 74.30 168.77 72.66 170.27 72.66 C172.66 72.66 175.04 74.30 177.42 74.30 C178.45 74.30 179.47 47.42 180.49 43.54 C181.51 39.66 182.53 36.37 183.55 36.37 C185.26 36.37 186.96 44.86 188.66 45.59 C190.02 46.18 191.39 46.62 192.75 46.62 C194.11 46.62 195.47 42.46 196.83 39.44 C197.52 37.93 198.20 33.70 198.88 33.70 C199.90 33.70 200.92 37.29 201.94 41.49 C202.96 45.69 203.99 74.30 205.01 74.30 C206.37 74.30 207.73 74.30 209.09 74.30 C210.46 74.30 211.82 72.48 213.18 72.25 C214.54 72.02 215.91 72.12 217.27 71.84 C218.29 71.63 219.31 51.80 220.33 49.69 C221.35 47.59 222.38 46.00 223.40 46.00 C225.44 46.00 227.48 46.40 229.53 46.62 C230.89 46.76 232.25 47.07 233.61 47.07 C234.98 47.07 236.34 46.77 237.70 46.62 L237.7 74.3 L25.2 74.3 Z" fill="url(#g2)" stroke="none"/><g stroke="#c0c4cc" stroke-width="0.85" opacity="0.45"><line x1="25.2" y1="9.30" x2="237.7" y2="9.30" stroke-dasharray="3.4 3"/><line x1="25.2" y1="25.55" x2="237.7" y2="25.55" stroke-dasharray="3.4 3"/><line x1="25.2" y1="41.80" x2="237.7" y2="41.80" stroke-dasharray="3.4 3"/><line x1="25.2" y1="58.05" x2="237.7" y2="58.05" stroke-dasharray="3.4 3"/><line x1="25.2" y1="74.30" x2="237.7" y2="74.30" stroke-dasharray="3.4 3"/><line x1="25.20" y1="74.3" x2="25.20" y2="9.3" stroke-dasharray="3.4 3"/><line x1="60.62" y1="74.3" x2="60.62" y2="9.3" stroke-dasharray="3.4 3"/><line x1="96.03" y1="74.3" x2="96.03" y2="9.3" stroke-dasharray="3.4 3"/><line x1="131.45" y1="74.3" x2="131.45" y2="9.3" stroke-dasharray="3.4 3"/><line x1="166.87" y1="74.3" x2="166.87" y2="9.3" stroke-dasharray="3.4 3"/><line x1="202.28" y1="74.3" x2="202.28" y2="9.3" stroke-dasharray="3.4 3"/><line x1="237.70" y1="74.3" x2="237.70" y2="9.3" stroke-dasharray="3.4 3"/></g><path d="M25.20 46.62 C26.56 46.70 27.92 46.86 29.29 46.86 C30.65 46.86 32.01 45.76 33.37 45.76 C34.74 45.76 36.10 45.87 37.46 46.00 C38.65 46.12 39.84 46.93 41.04 46.97 C42.23 47.01 43.42 46.99 44.61 47.03 C45.63 47.07 46.65 56.94 47.68 62.00 C48.49 66.04 49.31 74.30 50.13 74.30 C51.01 74.30 51.90 58.92 52.78 58.92 C53.81 58.92 54.83 61.40 55.85 62.00 C56.67 62.47 57.48 63.02 58.30 63.02 C58.85 63.02 59.39 34.93 59.94 34.93 C61.13 34.93 62.32 35.07 63.51 35.07 C64.70 35.07 65.90 34.32 67.09 34.32 C67.77 34.32 68.45 34.76 69.13 35.34 C69.81 35.92 70.49 41.08 71.17 41.08 C72.20 41.08 73.22 32.88 74.24 32.88 C75.60 32.88 76.96 33.02 78.32 33.02 C79.69 33.02 81.05 32.27 82.41 32.27 C83.55 32.27 84.68 32.92 85.82 32.92 C86.95 32.92 88.09 32.23 89.22 32.23 C90.36 32.23 91.49 32.41 92.63 32.88 C93.17 33.11 93.72 37.80 94.26 41.49 C95.08 47.02 95.90 63.14 96.71 66.10 C97.74 69.79 98.76 72.66 99.78 72.66 C100.80 72.66 101.82 66.30 102.84 66.10 C104.21 65.83 105.57 65.97 106.93 65.69 C107.95 65.48 108.97 45.18 110.00 45.18 C111.02 45.18 112.04 48.67 113.06 48.67 C114.97 48.67 116.87 48.67 118.78 48.67 C119.60 48.67 120.42 60.97 121.23 60.97 C122.05 60.97 122.87 46.21 123.69 46.21 C125.01 46.21 126.34 46.76 127.67 46.76 C129.00 46.76 130.33 45.96 131.65 45.96 C132.98 45.96 134.31 46.97 135.64 46.97 C136.97 46.97 138.29 46.62 139.62 46.62 C140.71 46.62 141.80 46.95 142.89 46.95 C143.98 46.95 145.07 45.92 146.16 45.92 C147.25 45.92 148.34 46.70 149.43 46.70 C150.52 46.70 151.61 45.68 152.70 45.68 C153.79 45.68 154.88 45.81 155.97 46.00 C157.33 46.24 158.69 47.48 160.06 49.69 C161.08 51.36 162.10 64.77 163.12 68.15 C164.01 71.08 164.89 74.30 165.78 74.30 C167.28 74.30 168.77 72.66 170.27 72.66 C172.66 72.66 175.04 74.30 177.42 74.30 C178.45 74.30 179.47 47.42 180.49 43.54 C181.51 39.66 182.53 36.37 183.55 36.37 C185.26 36.37 186.96 44.86 188.66 45.59 C190.02 46.18 191.39 46.62 192.75 46.62 C194.11 46.62 195.47 42.46 196.83 39.44 C197.52 37.93 198.20 33.70 198.88 33.70 C199.90 33.70 200.92 37.29 201.94 41.49 C202.96 45.69 203.99 74.30 205.01 74.30 C206.37 74.30 207.73 74.30 209.09 74.30 C210.46 74.30 211.82 72.48 213.18 72.25 C214.54 72.02 215.91 72.12 217.27 71.84 C218.29 71.63 219.31 51.80 220.33 49.69 C221.35 47.59 222.38 46.00 223.40 46.00 C225.44 46.00 227.48 46.40 229.53 46.62 C230.89 46.76 232.25 47.07 233.61 47.07 C234.98 47.07 236.34 46.77 237.70 46.62" fill="none" stroke="#3d6fe8" stroke-width="1.45"/></g></svg>
<div class="t" style="left:511.1px;top:119.9px;font-size:6.4px;line-height:6.4px;color:#444">LIN#4 <span style="color:#c8c8c8">Idle</span></div>
<div class="t" style="left:551.5px;width:200px;top:120.7px;font-size:5.25px;line-height:5.4px;color:#7a7a7a;text-align:right;word-spacing:0">Rate:0fps<span style="display:inline-block;width:7.2px"></span>Size:3.9M<span style="display:inline-block;width:7.2px"></span>Baud Rate:19200<span style="display:inline-block;width:6.5px"></span>Checksum:enhanced</div>
<svg class="ab" style="left:508px;top:132px;overflow:visible" width="249" height="91.4" viewBox="0 0 249 91.4"><g transform="translate(0.50,0.00)"><rect x="0.5" y="0.5" width="246" height="88.4" fill="#fff" stroke="#e4e4e4" stroke-width="1"/><line x1="22.00" y1="72.7" x2="22.00" y2="7.1" stroke="#c6c6c6" stroke-width="0.85" stroke-dasharray="3.4 3"/><text transform="translate(22.00,82.50) scale(1,1.14)" font-size="6.3" fill="#707070" text-anchor="middle" font-family="Liberation Sans">60s</text><line x1="57.95" y1="72.7" x2="57.95" y2="7.1" stroke="#c6c6c6" stroke-width="0.85" stroke-dasharray="3.4 3"/><text transform="translate(57.95,82.50) scale(1,1.14)" font-size="6.3" fill="#707070" text-anchor="middle" font-family="Liberation Sans">50s</text><line x1="93.90" y1="72.7" x2="93.90" y2="7.1" stroke="#c6c6c6" stroke-width="0.85" stroke-dasharray="3.4 3"/><text transform="translate(93.90,82.50) scale(1,1.14)" font-size="6.3" fill="#707070" text-anchor="middle" font-family="Liberation Sans">40s</text><line x1="129.85" y1="72.7" x2="129.85" y2="7.1" stroke="#c6c6c6" stroke-width="0.85" stroke-dasharray="3.4 3"/><text transform="translate(129.85,82.50) scale(1,1.14)" font-size="6.3" fill="#707070" text-anchor="middle" font-family="Liberation Sans">30s</text><line x1="165.80" y1="72.7" x2="165.80" y2="7.1" stroke="#c6c6c6" stroke-width="0.85" stroke-dasharray="3.4 3"/><text transform="translate(165.80,82.50) scale(1,1.14)" font-size="6.3" fill="#707070" text-anchor="middle" font-family="Liberation Sans">20s</text><line x1="201.75" y1="72.7" x2="201.75" y2="7.1" stroke="#c6c6c6" stroke-width="0.85" stroke-dasharray="3.4 3"/><text transform="translate(201.75,82.50) scale(1,1.14)" font-size="6.3" fill="#707070" text-anchor="middle" font-family="Liberation Sans">10s</text><line x1="237.70" y1="72.7" x2="237.70" y2="7.1" stroke="#c6c6c6" stroke-width="0.85" stroke-dasharray="3.4 3"/><text transform="translate(237.70,82.50) scale(1,1.14)" font-size="6.3" fill="#707070" text-anchor="middle" font-family="Liberation Sans">0s</text><text transform="translate(18.50,74.90) scale(1,1.14)" font-size="6.3" fill="#707070" text-anchor="end" font-family="Liberation Sans">0fps</text><line x1="22" y1="73.0" x2="237.7" y2="73.0" stroke="#7fa0ef" stroke-width="1.3"/></g></svg>
<div class="t" style="left:511.1px;top:232.5px;font-size:6.4px;line-height:6.4px;color:#444">LIN#11 <span style="color:#c8c8c8">Idle</span></div>
<div class="t" style="left:551.5px;width:200px;top:233.3px;font-size:5.25px;line-height:5.4px;color:#7a7a7a;text-align:right;word-spacing:0">Rate:0fps<span style="display:inline-block;width:7.2px"></span>Size:0 B<span style="display:inline-block;width:7.2px"></span>Baud Rate:19200<span style="display:inline-block;width:6.5px"></span>Checksum:enhanced</div>
<svg class="ab" style="left:508px;top:244px;overflow:visible" width="249" height="91.4" viewBox="0 0 249 91.4"><g transform="translate(0.50,0.20)"><rect x="0.5" y="0.5" width="246" height="88.4" fill="#fff" stroke="#e4e4e4" stroke-width="1"/><line x1="22.00" y1="72.9" x2="22.00" y2="7.1" stroke="#c6c6c6" stroke-width="0.85" stroke-dasharray="3.4 3"/><text transform="translate(22.00,82.70) scale(1,1.14)" font-size="6.3" fill="#707070" text-anchor="middle" font-family="Liberation Sans">60s</text><line x1="57.95" y1="72.9" x2="57.95" y2="7.1" stroke="#c6c6c6" stroke-width="0.85" stroke-dasharray="3.4 3"/><text transform="translate(57.95,82.70) scale(1,1.14)" font-size="6.3" fill="#707070" text-anchor="middle" font-family="Liberation Sans">50s</text><line x1="93.90" y1="72.9" x2="93.90" y2="7.1" stroke="#c6c6c6" stroke-width="0.85" stroke-dasharray="3.4 3"/><text transform="translate(93.90,82.70) scale(1,1.14)" font-size="6.3" fill="#707070" text-anchor="middle" font-family="Liberation Sans">40s</text><line x1="129.85" y1="72.9" x2="129.85" y2="7.1" stroke="#c6c6c6" stroke-width="0.85" stroke-dasharray="3.4 3"/><text transform="translate(129.85,82.70) scale(1,1.14)" font-size="6.3" fill="#707070" text-anchor="middle" font-family="Liberation Sans">30s</text><line x1="165.80" y1="72.9" x2="165.80" y2="7.1" stroke="#c6c6c6" stroke-width="0.85" stroke-dasharray="3.4 3"/><text transform="translate(165.80,82.70) scale(1,1.14)" font-size="6.3" fill="#707070" text-anchor="middle" font-family="Liberation Sans">20s</text><line x1="201.75" y1="72.9" x2="201.75" y2="7.1" stroke="#c6c6c6" stroke-width="0.85" stroke-dasharray="3.4 3"/><text transform="translate(201.75,82.70) scale(1,1.14)" font-size="6.3" fill="#707070" text-anchor="middle" font-family="Liberation Sans">10s</text><line x1="237.70" y1="72.9" x2="237.70" y2="7.1" stroke="#c6c6c6" stroke-width="0.85" stroke-dasharray="3.4 3"/><text transform="translate(237.70,82.70) scale(1,1.14)" font-size="6.3" fill="#707070" text-anchor="middle" font-family="Liberation Sans">0s</text><text transform="translate(18.50,75.10) scale(1,1.14)" font-size="6.3" fill="#707070" text-anchor="end" font-family="Liberation Sans">0fps</text><line x1="22" y1="73.2" x2="237.7" y2="73.2" stroke="#7fa0ef" stroke-width="1.3"/></g></svg>
<div class="t" style="left:764.2px;top:8.1px;font-size:6.4px;line-height:6.4px;color:#444">LIN#8 <span style="color:#3bbf6b">Running</span></div>
<div class="t" style="left:804.6px;width:200px;top:8.9px;font-size:5.25px;line-height:5.4px;color:#7a7a7a;text-align:right;word-spacing:0">Rate:34fps<span style="display:inline-block;width:7.2px"></span>Size:170.7K<span style="display:inline-block;width:7.2px"></span>Baud Rate:19200<span style="display:inline-block;width:6.5px"></span>Checksum:enhanced</div>
<svg class="ab" style="left:761px;top:19px;overflow:visible" width="249" height="91.4" viewBox="0 0 249 91.4"><g transform="translate(0.60,0.00)"><rect x="0.5" y="0.5" width="246" height="88.4" fill="#fff" stroke="#e4e4e4" stroke-width="1"/><defs><linearGradient id="g3" x1="0" y1="0" x2="0" y2="1"><stop offset="0" stop-color="#6189ea"/><stop offset="1" stop-color="#fafbff"/></linearGradient></defs><line x1="25.2" y1="9.30" x2="237.7" y2="9.30" stroke="#c6c6c6" stroke-width="0.85" stroke-dasharray="3.4 3"/><text transform="translate(21.00,11.40) scale(1,1.14)" font-size="6.3" fill="#707070" text-anchor="end" font-family="Liberation Sans">80fps</text><line x1="25.2" y1="25.55" x2="237.7" y2="25.55" stroke="#c6c6c6" stroke-width="0.85" stroke-dasharray="3.4 3"/><text transform="translate(21.00,27.65) scale(1,1.14)" font-size="6.3" fill="#707070" text-anchor="end" font-family="Liberation Sans">60fps</text><line x1="25.2" y1="41.80" x2="237.7" y2="41.80" stroke="#c6c6c6" stroke-width="0.85" stroke-dasharray="3.4 3"/><text transform="translate(21.00,43.90) scale(1,1.14)" font-size="6.3" fill="#707070" text-anchor="end" font-family="Liberation Sans">40fps</text><line x1="25.2" y1="58.05" x2="237.7" y2="58.05" stroke="#c6c6c6" stroke-width="0.85" stroke-dasharray="3.4 3"/><text transform="translate(21.00,60.15) scale(1,1.14)" font-size="6.3" fill="#707070" text-anchor="end" font-family="Liberation Sans">20fps</text><line x1="25.2" y1="74.30" x2="237.7" y2="74.30" stroke="#c6c6c6" stroke-width="0.85" stroke-dasharray="3.4 3"/><text transform="translate(21.00,76.40) scale(1,1.14)" font-size="6.3" fill="#707070" text-anchor="end" font-family="Liberation Sans">0fps</text><line x1="25.20" y1="74.3" x2="25.20" y2="9.3" stroke="#c6c6c6" stroke-width="0.85" stroke-dasharray="3.4 3"/><text transform="translate(25.20,83.70) scale(1,1.14)" font-size="6.3" fill="#707070" text-anchor="middle" font-family="Liberation Sans">60s</text><line x1="60.62" y1="74.3" x2="60.62" y2="9.3" stroke="#c6c6c6" stroke-width="0.85" stroke-dasharray="3.4 3"/><text transform="translate(60.62,83.70) scale(1,1.14)" font-size="6.3" fill="#707070" text-anchor="middle" font-family="Liberation Sans">50s</text><line x1="96.03" y1="74.3" x2="96.03" y2="9.3" stroke="#c6c6c6" stroke-width="0.85" stroke-dasharray="3.4 3"/><text transform="translate(96.03,83.70) scale(1,1.14)" font-size="6.3" fill="#707070" text-anchor="middle" font-family="Liberation Sans">40s</text><line x1="131.45" y1="74.3" x2="131.45" y2="9.3" stroke="#c6c6c6" stroke-width="0.85" stroke-dasharray="3.4 3"/><text transform="translate(131.45,83.70) scale(1,1.14)" font-size="6.3" fill="#707070" text-anchor="middle" font-family="Liberation Sans">30s</text><line x1="166.87" y1="74.3" x2="166.87" y2="9.3" stroke="#c6c6c6" stroke-width="0.85" stroke-dasharray="3.4 3"/><text transform="translate(166.87,83.70) scale(1,1.14)" font-size="6.3" fill="#707070" text-anchor="middle" font-family="Liberation Sans">20s</text><line x1="202.28" y1="74.3" x2="202.28" y2="9.3" stroke="#c6c6c6" stroke-width="0.85" stroke-dasharray="3.4 3"/><text transform="translate(202.28,83.70) scale(1,1.14)" font-size="6.3" fill="#707070" text-anchor="middle" font-family="Liberation Sans">10s</text><line x1="237.70" y1="74.3" x2="237.70" y2="9.3" stroke="#c6c6c6" stroke-width="0.85" stroke-dasharray="3.4 3"/><text transform="translate(237.70,83.70) scale(1,1.14)" font-size="6.3" fill="#707070" text-anchor="middle" font-family="Liberation Sans">0s</text><path d="M25.20 46.62 C26.39 46.72 27.58 46.91 28.78 46.91 C29.97 46.91 31.16 45.86 32.35 45.86 C33.54 45.86 34.74 46.61 35.93 46.61 C37.12 46.61 38.31 46.00 39.50 46.00 C40.69 46.00 41.89 46.93 43.08 46.97 C44.27 47.01 45.46 46.98 46.65 47.03 C47.34 47.05 48.02 56.58 48.70 62.00 C49.17 65.79 49.65 74.30 50.13 74.30 C51.01 74.30 51.90 59.98 52.78 57.90 C53.47 56.29 54.15 54.82 54.83 54.82 C55.85 54.82 56.87 58.92 57.89 58.92 C58.57 58.92 59.25 33.04 59.94 32.88 C61.98 32.39 64.02 32.27 66.07 32.27 C67.77 32.27 69.47 37.39 71.17 37.39 C72.54 37.39 73.90 32.88 75.26 32.88 C76.79 32.88 78.33 33.02 79.86 33.02 C81.39 33.02 82.92 32.27 84.45 32.27 C85.89 32.27 87.32 33.02 88.75 33.02 C90.18 33.02 91.61 32.88 93.04 32.88 C93.92 32.88 94.81 41.95 95.69 47.64 C96.71 54.21 97.74 71.22 98.76 71.22 C99.78 71.22 100.80 59.95 101.82 59.95 C102.84 59.95 103.87 60.97 104.89 60.97 C105.77 60.97 106.66 60.97 107.54 60.97 C108.36 60.97 109.18 44.57 110.00 44.57 C111.02 44.57 112.04 47.23 113.06 47.23 C114.76 47.23 116.47 46.82 118.17 46.82 C119.05 46.82 119.94 53.80 120.83 53.80 C121.78 53.80 122.73 46.21 123.69 46.21 C124.88 46.21 126.08 46.74 127.28 46.74 C128.48 46.74 129.68 45.92 130.88 45.92 C132.08 45.92 133.28 46.90 134.47 46.90 C135.67 46.90 136.87 46.09 138.07 46.09 C139.27 46.09 140.47 46.52 141.67 46.62 C143.03 46.74 144.39 46.86 145.75 46.86 C147.12 46.86 148.48 45.76 149.84 45.76 C151.20 45.76 152.56 45.86 153.93 46.00 C155.97 46.21 158.01 47.23 160.06 49.69 C161.08 50.92 162.10 64.77 163.12 68.15 C164.01 71.08 164.89 74.30 165.78 74.30 C167.28 74.30 168.77 72.66 170.27 72.66 C171.77 72.66 173.27 74.30 174.77 74.30 C175.86 74.30 176.95 64.80 178.04 57.90 C178.99 51.86 179.94 34.00 180.90 33.70 C182.80 33.10 184.71 32.88 186.62 32.88 C187.64 32.88 188.66 33.02 189.68 33.29 C190.36 33.47 191.05 37.80 191.73 37.80 C193.09 37.80 194.45 34.16 195.81 33.70 C197.18 33.24 198.54 32.88 199.90 32.88 C200.58 32.88 201.26 36.47 201.94 39.44 C202.96 43.89 203.99 55.28 205.01 62.00 C205.69 66.48 206.37 74.30 207.05 74.30 C208.41 74.30 209.78 74.13 211.14 73.89 C212.84 73.59 214.54 72.11 216.25 69.17 C217.13 67.65 218.02 57.41 218.90 53.80 C219.72 50.45 220.54 46.00 221.35 46.00 C222.72 46.00 224.08 46.76 225.44 46.76 C226.80 46.76 228.16 46.62 229.53 46.62 C230.89 46.62 232.25 47.07 233.61 47.07 C234.98 47.07 236.34 46.77 237.70 46.62 L237.7 74.3 L25.2 74.3 Z" fill="url(#g3)" stroke="none"/><g stroke="#c0c4cc" stroke-width="0.85" opacity="0.45"><line x1="25.2" y1="9.30" x2="237.7" y2="9.30" stroke-dasharray="3.4 3"/><line x1="25.2" y1="25.55" x2="237.7" y2="25.55" stroke-dasharray="3.4 3"/><line x1="25.2" y1="41.80" x2="237.7" y2="41.80" stroke-dasharray="3.4 3"/><line x1="25.2" y1="58.05" x2="237.7" y2="58.05" stroke-dasharray="3.4 3"/><line x1="25.2" y1="74.30" x2="237.7" y2="74.30" stroke-dasharray="3.4 3"/><line x1="25.20" y1="74.3" x2="25.20" y2="9.3" stroke-dasharray="3.4 3"/><line x1="60.62" y1="74.3" x2="60.62" y2="9.3" stroke-dasharray="3.4 3"/><line x1="96.03" y1="74.3" x2="96.03" y2="9.3" stroke-dasharray="3.4 3"/><line x1="131.45" y1="74.3" x2="131.45" y2="9.3" stroke-dasharray="3.4 3"/><line x1="166.87" y1="74.3" x2="166.87" y2="9.3" stroke-dasharray="3.4 3"/><line x1="202.28" y1="74.3" x2="202.28" y2="9.3" stroke-dasharray="3.4 3"/><line x1="237.70" y1="74.3" x2="237.70" y2="9.3" stroke-dasharray="3.4 3"/></g><path d="M25.20 46.62 C26.39 46.72 27.58 46.91 28.78 46.91 C29.97 46.91 31.16 45.86 32.35 45.86 C33.54 45.86 34.74 46.61 35.93 46.61 C37.12 46.61 38.31 46.00 39.50 46.00 C40.69 46.00 41.89 46.93 43.08 46.97 C44.27 47.01 45.46 46.98 46.65 47.03 C47.34 47.05 48.02 56.58 48.70 62.00 C49.17 65.79 49.65 74.30 50.13 74.30 C51.01 74.30 51.90 59.98 52.78 57.90 C53.47 56.29 54.15 54.82 54.83 54.82 C55.85 54.82 56.87 58.92 57.89 58.92 C58.57 58.92 59.25 33.04 59.94 32.88 C61.98 32.39 64.02 32.27 66.07 32.27 C67.77 32.27 69.47 37.39 71.17 37.39 C72.54 37.39 73.90 32.88 75.26 32.88 C76.79 32.88 78.33 33.02 79.86 33.02 C81.39 33.02 82.92 32.27 84.45 32.27 C85.89 32.27 87.32 33.02 88.75 33.02 C90.18 33.02 91.61 32.88 93.04 32.88 C93.92 32.88 94.81 41.95 95.69 47.64 C96.71 54.21 97.74 71.22 98.76 71.22 C99.78 71.22 100.80 59.95 101.82 59.95 C102.84 59.95 103.87 60.97 104.89 60.97 C105.77 60.97 106.66 60.97 107.54 60.97 C108.36 60.97 109.18 44.57 110.00 44.57 C111.02 44.57 112.04 47.23 113.06 47.23 C114.76 47.23 116.47 46.82 118.17 46.82 C119.05 46.82 119.94 53.80 120.83 53.80 C121.78 53.80 122.73 46.21 123.69 46.21 C124.88 46.21 126.08 46.74 127.28 46.74 C128.48 46.74 129.68 45.92 130.88 45.92 C132.08 45.92 133.28 46.90 134.47 46.90 C135.67 46.90 136.87 46.09 138.07 46.09 C139.27 46.09 140.47 46.52 141.67 46.62 C143.03 46.74 144.39 46.86 145.75 46.86 C147.12 46.86 148.48 45.76 149.84 45.76 C151.20 45.76 152.56 45.86 153.93 46.00 C155.97 46.21 158.01 47.23 160.06 49.69 C161.08 50.92 162.10 64.77 163.12 68.15 C164.01 71.08 164.89 74.30 165.78 74.30 C167.28 74.30 168.77 72.66 170.27 72.66 C171.77 72.66 173.27 74.30 174.77 74.30 C175.86 74.30 176.95 64.80 178.04 57.90 C178.99 51.86 179.94 34.00 180.90 33.70 C182.80 33.10 184.71 32.88 186.62 32.88 C187.64 32.88 188.66 33.02 189.68 33.29 C190.36 33.47 191.05 37.80 191.73 37.80 C193.09 37.80 194.45 34.16 195.81 33.70 C197.18 33.24 198.54 32.88 199.90 32.88 C200.58 32.88 201.26 36.47 201.94 39.44 C202.96 43.89 203.99 55.28 205.01 62.00 C205.69 66.48 206.37 74.30 207.05 74.30 C208.41 74.30 209.78 74.13 211.14 73.89 C212.84 73.59 214.54 72.11 216.25 69.17 C217.13 67.65 218.02 57.41 218.90 53.80 C219.72 50.45 220.54 46.00 221.35 46.00 C222.72 46.00 224.08 46.76 225.44 46.76 C226.80 46.76 228.16 46.62 229.53 46.62 C230.89 46.62 232.25 47.07 233.61 47.07 C234.98 47.07 236.34 46.77 237.70 46.62" fill="none" stroke="#3d6fe8" stroke-width="1.45"/></g></svg>
<div class="t" style="left:764.2px;top:119.9px;font-size:6.4px;line-height:6.4px;color:#444">LIN#7 <span style="color:#c8c8c8">Idle</span></div>
<div class="t" style="left:804.6px;width:200px;top:120.7px;font-size:5.25px;line-height:5.4px;color:#7a7a7a;text-align:right;word-spacing:0">Rate:0fps<span style="display:inline-block;width:7.2px"></span>Size:0 B<span style="display:inline-block;width:7.2px"></span>Baud Rate:19200<span style="display:inline-block;width:6.5px"></span>Checksum:enhanced</div>
<svg class="ab" style="left:761px;top:132px;overflow:visible" width="249" height="91.4" viewBox="0 0 249 91.4"><g transform="translate(0.60,0.00)"><rect x="0.5" y="0.5" width="246" height="88.4" fill="#fff" stroke="#e4e4e4" stroke-width="1"/><line x1="22.00" y1="72.7" x2="22.00" y2="7.1" stroke="#c6c6c6" stroke-width="0.85" stroke-dasharray="3.4 3"/><text transform="translate(22.00,82.50) scale(1,1.14)" font-size="6.3" fill="#707070" text-anchor="middle" font-family="Liberation Sans">60s</text><line x1="57.95" y1="72.7" x2="57.95" y2="7.1" stroke="#c6c6c6" stroke-width="0.85" stroke-dasharray="3.4 3"/><text transform="translate(57.95,82.50) scale(1,1.14)" font-size="6.3" fill="#707070" text-anchor="middle" font-family="Liberation Sans">50s</text><line x1="93.90" y1="72.7" x2="93.90" y2="7.1" stroke="#c6c6c6" stroke-width="0.85" stroke-dasharray="3.4 3"/><text transform="translate(93.90,82.50) scale(1,1.14)" font-size="6.3" fill="#707070" text-anchor="middle" font-family="Liberation Sans">40s</text><line x1="129.85" y1="72.7" x2="129.85" y2="7.1" stroke="#c6c6c6" stroke-width="0.85" stroke-dasharray="3.4 3"/><text transform="translate(129.85,82.50) scale(1,1.14)" font-size="6.3" fill="#707070" text-anchor="middle" font-family="Liberation Sans">30s</text><line x1="165.80" y1="72.7" x2="165.80" y2="7.1" stroke="#c6c6c6" stroke-width="0.85" stroke-dasharray="3.4 3"/><text transform="translate(165.80,82.50) scale(1,1.14)" font-size="6.3" fill="#707070" text-anchor="middle" font-family="Liberation Sans">20s</text><line x1="201.75" y1="72.7" x2="201.75" y2="7.1" stroke="#c6c6c6" stroke-width="0.85" stroke-dasharray="3.4 3"/><text transform="translate(201.75,82.50) scale(1,1.14)" font-size="6.3" fill="#707070" text-anchor="middle" font-family="Liberation Sans">10s</text><line x1="237.70" y1="72.7" x2="237.70" y2="7.1" stroke="#c6c6c6" stroke-width="0.85" stroke-dasharray="3.4 3"/><text transform="translate(237.70,82.50) scale(1,1.14)" font-size="6.3" fill="#707070" text-anchor="middle" font-family="Liberation Sans">0s</text><text transform="translate(18.50,74.90) scale(1,1.14)" font-size="6.3" fill="#707070" text-anchor="end" font-family="Liberation Sans">0fps</text><line x1="22" y1="73.0" x2="237.7" y2="73.0" stroke="#7fa0ef" stroke-width="1.3"/></g></svg>
<div class="t" style="left:764.2px;top:232.5px;font-size:6.4px;line-height:6.4px;color:#444">LIN#12 <span style="color:#c8c8c8">Idle</span></div>
<div class="t" style="left:804.6px;width:200px;top:233.3px;font-size:5.25px;line-height:5.4px;color:#7a7a7a;text-align:right;word-spacing:0">Rate:0fps<span style="display:inline-block;width:7.2px"></span>Size:3.0M<span style="display:inline-block;width:7.2px"></span>Baud Rate:19200<span style="display:inline-block;width:6.5px"></span>Checksum:enhanced</div>
<svg class="ab" style="left:761px;top:244px;overflow:visible" width="249" height="91.4" viewBox="0 0 249 91.4"><g transform="translate(0.60,0.20)"><rect x="0.5" y="0.5" width="246" height="88.4" fill="#fff" stroke="#e4e4e4" stroke-width="1"/><line x1="22.00" y1="72.9" x2="22.00" y2="7.1" stroke="#c6c6c6" stroke-width="0.85" stroke-dasharray="3.4 3"/><text transform="translate(22.00,82.70) scale(1,1.14)" font-size="6.3" fill="#707070" text-anchor="middle" font-family="Liberation Sans">60s</text><line x1="57.95" y1="72.9" x2="57.95" y2="7.1" stroke="#c6c6c6" stroke-width="0.85" stroke-dasharray="3.4 3"/><text transform="translate(57.95,82.70) scale(1,1.14)" font-size="6.3" fill="#707070" text-anchor="middle" font-family="Liberation Sans">50s</text><line x1="93.90" y1="72.9" x2="93.90" y2="7.1" stroke="#c6c6c6" stroke-width="0.85" stroke-dasharray="3.4 3"/><text transform="translate(93.90,82.70) scale(1,1.14)" font-size="6.3" fill="#707070" text-anchor="middle" font-family="Liberation Sans">40s</text><line x1="129.85" y1="72.9" x2="129.85" y2="7.1" stroke="#c6c6c6" stroke-width="0.85" stroke-dasharray="3.4 3"/><text transform="translate(129.85,82.70) scale(1,1.14)" font-size="6.3" fill="#707070" text-anchor="middle" font-family="Liberation Sans">30s</text><line x1="165.80" y1="72.9" x2="165.80" y2="7.1" stroke="#c6c6c6" stroke-width="0.85" stroke-dasharray="3.4 3"/><text transform="translate(165.80,82.70) scale(1,1.14)" font-size="6.3" fill="#707070" text-anchor="middle" font-family="Liberation Sans">20s</text><line x1="201.75" y1="72.9" x2="201.75" y2="7.1" stroke="#c6c6c6" stroke-width="0.85" stroke-dasharray="3.4 3"/><text transform="translate(201.75,82.70) scale(1,1.14)" font-size="6.3" fill="#707070" text-anchor="middle" font-family="Liberation Sans">10s</text><line x1="237.70" y1="72.9" x2="237.70" y2="7.1" stroke="#c6c6c6" stroke-width="0.85" stroke-dasharray="3.4 3"/><text transform="translate(237.70,82.70) scale(1,1.14)" font-size="6.3" fill="#707070" text-anchor="middle" font-family="Liberation Sans">0s</text><text transform="translate(18.50,75.10) scale(1,1.14)" font-size="6.3" fill="#707070" text-anchor="end" font-family="Liberation Sans">0fps</text><line x1="22" y1="73.2" x2="237.7" y2="73.2" stroke="#7fa0ef" stroke-width="1.3"/></g></svg>
</div>
<div class="t" style="left:12.7px;top:674.22px;font-size:6.36px;font-weight:normal;color:#555;height:6.36px;line-height:6.36px;">Name:12</div>
<div class="t" style="left:46.8px;top:674.20px;font-size:6.4px;font-weight:normal;color:#555;height:6.4px;line-height:6.4px;">IP:192.168.8.12</div>
<div class="t" style="left:100.5px;top:674.25px;font-size:6.3px;font-weight:normal;color:#555;height:6.3px;line-height:6.3px;">Status:connected</div>
<div class="ab" style="left:157.5px;top:670.2px;width:49.3px;height:13.5px;border:1px solid #f07a7a;border-radius:1.5px"></div>
<div class="t" style="left:166.7px;top:674.23px;font-size:6.35px;font-weight:normal;color:#ec5b5b;height:6.35px;line-height:6.35px;">Disconnect</div>
<div class="ab" style="left:211px;top:670.5px;width:0.9px;height:11px;background:#bbb;"></div>
<svg class="ab" style="left:215.5px;top:673.5px" width="7.5" height="7.5" viewBox="0 0 8 8"><circle cx="4" cy="4" r="3.2" fill="none" stroke="#555" stroke-width="0.8"/><ellipse cx="4" cy="4" rx="1.4" ry="3.2" fill="none" stroke="#555" stroke-width="0.7"/><path d="M0.8 4 H7.2" stroke="#555" stroke-width="0.7"/></svg>
<div class="t" style="left:226.9px;top:674.20px;font-size:6.4px;font-weight:normal;color:#555;height:6.4px;line-height:6.4px;">Web GUI</div>
<div class="ab" style="left:257.3px;top:670.5px;width:0.9px;height:11px;background:#bbb;"></div>
<svg class="ab" style="left:261.5px;top:672.5px" width="8" height="9" viewBox="0 0 8 9"><path d="M1.5 2.2 Q4 0 6.5 2.2 M2.6 3.2 Q4 2 5.4 3.2" fill="none" stroke="#555" stroke-width="0.8"/><path d="M4 3.6 V5.6" stroke="#555" stroke-width="0.8"/><rect x="1" y="5.6" width="6" height="2.6" fill="none" stroke="#555" stroke-width="0.8"/></svg>
<div class="t" style="left:272.8px;top:674.21px;font-size:6.38px;font-weight:normal;color:#555;height:6.38px;line-height:6.38px;">Find My Datalogger</div>
<div class="t" style="left:631.4px;top:673.32px;font-size:6.36px;font-weight:normal;color:#555;height:6.36px;line-height:6.36px;">TraceClient v1.4.3 ©ZD-Automotive GmbH@2023</div>
<div class="t" style="left:1075px;top:673.33px;font-size:6.35px;font-weight:normal;color:#555;height:6.35px;line-height:6.35px;">Logger time:Thursday. 2024.01.25 16:28:36(Asia/Shanghai+08:00)</div>
</body></html>
